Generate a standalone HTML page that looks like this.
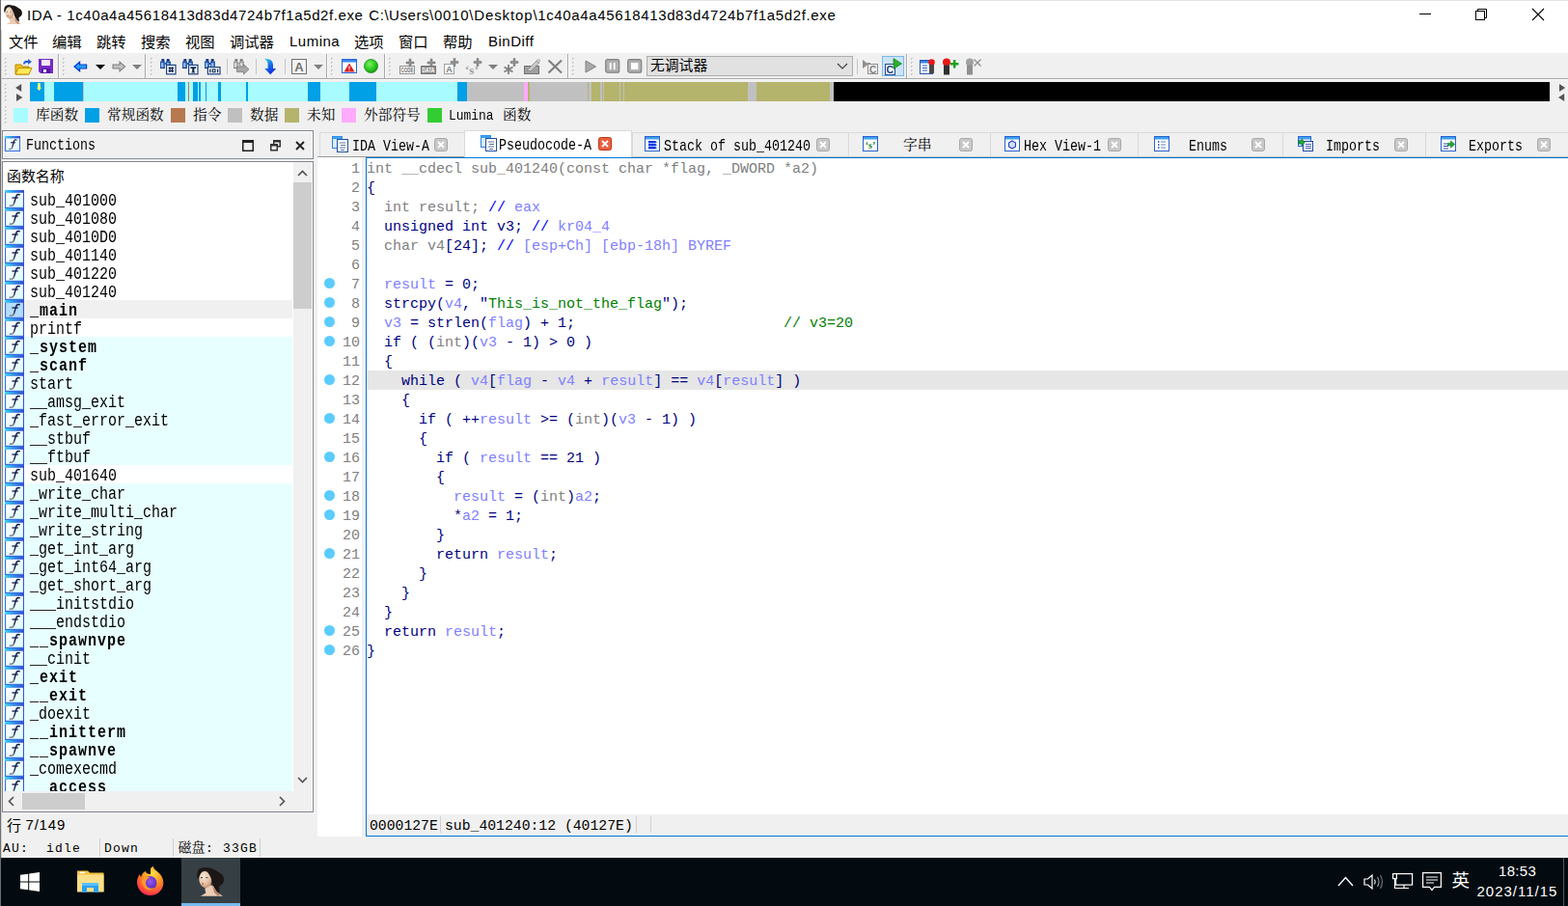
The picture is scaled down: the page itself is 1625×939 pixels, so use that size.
<!DOCTYPE html>
<html><head><meta charset="utf-8"><title>IDA</title>
<style>
html,body{margin:0;padding:0;}
body{width:1625px;height:939px;overflow:hidden;background:#f0f0f0;font-family:"Liberation Sans",sans-serif;}
#root{position:relative;width:1625px;height:939px;overflow:hidden;background:#f0f0f0;}
#root div,#root span.t,#root svg{position:absolute;}
#root div{box-sizing:border-box;}
span.t{white-space:pre;color:#000;}
.mono{font-family:"Liberation Mono",monospace;}
.sans{font-family:"Liberation Sans",sans-serif;}
.serif{font-family:"Liberation Serif",serif;}
.code{font-family:"Liberation Mono",monospace;font-size:15px;}
.fn{font-family:"Liberation Mono",monospace;font-size:15px;}
.b{font-weight:bold;letter-spacing:1px;}
.g{color:#808080}.n{color:#000080}.l{color:#8080ff}.c{color:#0000ff}.s{color:#008000}
.sim{display:inline-block;transform:scaleY(1.2);transform-origin:0 55%;}
.cjs{font-family:"Liberation Sans","Noto Sans CJK SC",sans-serif;}
.cjf{font-family:"Liberation Serif","Noto Serif CJK SC",serif;}

</style></head>
<body>
<div id="root">
<div style="left:0px;top:0px;width:1625px;height:31px;background:#fff;"></div>
<svg style="left:3.7px;top:5px" width="19.2" height="20.2" viewBox="0 0 28.5 30"><defs><filter id="pb0" x="-10%" y="-10%" width="120%" height="120%"><feGaussianBlur stdDeviation="0.5"/></filter>
<radialGradient id="pf0" cx="0.4" cy="0.3" r="0.8"><stop offset="0" stop-color="#f6e8d8"/><stop offset="0.6" stop-color="#e4c0a4"/><stop offset="1" stop-color="#b8805c"/></radialGradient></defs>
<g filter="url(#pb0)">
<path d="M8.3 21.8L13.6 18L17.2 19.5L20.5 25.5L27 29.8H3.8L9.3 26.6Z" fill="#ecccb4"/>
<path d="M16 19L20.5 25.5L24 28.5L22 29.8L18 26Z" fill="#b88060"/>
<ellipse cx="8.8" cy="12.6" rx="6.5" ry="8.6" transform="rotate(-8 8.8 12.6)" fill="url(#pf0)"/>
<path d="M0.6 11.5Q-0.5 5 2.4 1.8Q6 -0.6 10 0.3Q15 0.4 18.5 2.4L22.8 5.2Q27.6 7 28.2 12.6Q28 17 23 19.8L23.6 26.4L20.4 24Q17.4 20 16 16.5Q15.5 12 14 9.5Q11.5 4 8.8 3.4Q5 3.5 3.6 6.4Q2.4 9 1.6 11.8Z" fill="#1e1412"/>
<ellipse cx="6.2" cy="17" rx="1.1" ry="0.8" fill="#c04838"/>
<ellipse cx="5" cy="10.6" rx="1.2" ry="0.6" fill="#4a342c"/><ellipse cx="10.2" cy="10.6" rx="1.2" ry="0.6" fill="#5a4a50"/>
</g></svg>
<span class="t sans" style="left:28px;top:4.5px;height:22px;line-height:22px;font-size:15px;letter-spacing:0.63px;">IDA - </span>
<span class="t sans" style="left:69.3px;top:4.5px;height:22px;line-height:22px;font-size:15px;letter-spacing:0.583px;">1c40a4a45618413d</span>
<span class="t sans" style="left:211.3px;top:4.5px;height:22px;line-height:22px;font-size:15px;letter-spacing:0.583px;">83d4724b7f1a5d2f.exe</span>
<span class="t sans" style="left:382.3px;top:4.5px;height:22px;line-height:22px;font-size:15px;letter-spacing:0.55px;">C:\Users</span>
<span class="t sans" style="left:445px;top:4.5px;height:22px;line-height:22px;font-size:15px;letter-spacing:0.75px;">\0010</span>
<span class="t sans" style="left:486.3px;top:4.5px;height:22px;line-height:22px;font-size:15px;letter-spacing:0.86px;">\Desktop</span>
<span class="t sans" style="left:552.4px;top:4.5px;height:22px;line-height:22px;font-size:15px;letter-spacing:0.643px;">\1c40a4a45618413d</span>
<span class="t sans" style="left:700.1px;top:4.5px;height:22px;line-height:22px;font-size:15px;letter-spacing:0.643px;">83d4724b7f1a5d2f.exe</span>
<div style="left:1471px;top:14px;width:12px;height:1px;background:#000;"></div>
<div style="left:1px;top:0px;width:1624px;height:1px;background:#e2e2e8;"></div>
<svg style="left:1528px;top:8px" width="14" height="14" viewBox="0 0 14 14" fill="none" stroke="#000" stroke-width="1"><rect x="1.5" y="3.5" width="9" height="9"/><path d="M3.5 3.5V1.5H12.5V10.5H10.5"/></svg>
<svg style="left:1587px;top:8px" width="14" height="14" viewBox="0 0 14 14" fill="none" stroke="#000" stroke-width="1.1"><path d="M1 1L13 13M13 1L1 13"/></svg>
<div style="left:0px;top:31px;width:1625px;height:24px;background:#fff;"></div>
<span class="t cjs" style="left:9px;top:35.5px;height:15.3px;line-height:15.3px;font-size:15.3px;">文件</span>
<span class="t cjs" style="left:54px;top:35.5px;height:15.3px;line-height:15.3px;font-size:15.3px;">编辑</span>
<span class="t cjs" style="left:100px;top:35.5px;height:15.3px;line-height:15.3px;font-size:15.3px;">跳转</span>
<span class="t cjs" style="left:146px;top:35.5px;height:15.3px;line-height:15.3px;font-size:15.3px;">搜索</span>
<span class="t cjs" style="left:192px;top:35.5px;height:15.3px;line-height:15.3px;font-size:15.3px;">视图</span>
<span class="t cjs" style="left:238px;top:35.5px;height:15.3px;line-height:15.3px;font-size:15.3px;">调试器</span>
<span class="t sans" style="left:300px;top:33px;height:20px;line-height:20px;font-size:15px;letter-spacing:0.5px;">Lumina</span>
<span class="t cjs" style="left:367px;top:35.5px;height:15.3px;line-height:15.3px;font-size:15.3px;">选项</span>
<span class="t cjs" style="left:413px;top:35.5px;height:15.3px;line-height:15.3px;font-size:15.3px;">窗口</span>
<span class="t cjs" style="left:459px;top:35.5px;height:15.3px;line-height:15.3px;font-size:15.3px;">帮助</span>
<span class="t sans" style="left:506px;top:33px;height:20px;line-height:20px;font-size:15px;letter-spacing:0.5px;">BinDiff</span>
<div style="left:0px;top:55px;width:1625px;height:28px;background:#f0f0f0;"></div>
<div style="left:0px;top:81px;width:1625px;height:1px;background:#a8a8a8;"></div>
<div style="left:0px;top:82px;width:1625px;height:1px;background:#fafafa;"></div>
<div style="left:5px;top:60px;width:2px;height:2px;background:#c6c6c6;"></div>
<div style="left:6px;top:61px;width:1px;height:1px;background:#fff;"></div>
<div style="left:5px;top:64px;width:2px;height:2px;background:#c6c6c6;"></div>
<div style="left:6px;top:65px;width:1px;height:1px;background:#fff;"></div>
<div style="left:5px;top:68px;width:2px;height:2px;background:#c6c6c6;"></div>
<div style="left:6px;top:69px;width:1px;height:1px;background:#fff;"></div>
<div style="left:5px;top:72px;width:2px;height:2px;background:#c6c6c6;"></div>
<div style="left:6px;top:73px;width:1px;height:1px;background:#fff;"></div>
<div style="left:5px;top:76px;width:2px;height:2px;background:#c6c6c6;"></div>
<div style="left:6px;top:77px;width:1px;height:1px;background:#fff;"></div>
<svg style="left:15px;top:60px" width="19" height="18" viewBox="0 0 19 18"><path d="M1 7H7L8 9H15V17H1Z" fill="#f0c020" stroke="#b88800" stroke-width="1"/>
<path d="M1 17L4 10.5H18L15 17Z" fill="#ffe858" stroke="#c09000" stroke-width="1"/>
<path d="M9 6Q10 2 14 3V1L18 4L14 7V5Q11 4.5 10 7Z" fill="#2860d8"/></svg>
<svg style="left:39px;top:61px" width="17" height="15" viewBox="0 0 17 15"><path d="M1 0H16V15H3L1 13Z" fill="#7828c8"/><rect x="4" y="1" width="9" height="6" fill="#f4e8f4"/>
<rect x="4" y="10" width="9" height="5" fill="#5818a0"/><rect x="6" y="11" width="3" height="3" fill="#fff"/></svg>
<div style="left:60px;top:56px;width:1px;height:25px;background:#a8a8a8;"></div>
<div style="left:61px;top:56px;width:1px;height:25px;background:#fff;"></div>
<div style="left:65px;top:60px;width:2px;height:2px;background:#c6c6c6;"></div>
<div style="left:66px;top:61px;width:1px;height:1px;background:#fff;"></div>
<div style="left:65px;top:64px;width:2px;height:2px;background:#c6c6c6;"></div>
<div style="left:66px;top:65px;width:1px;height:1px;background:#fff;"></div>
<div style="left:65px;top:68px;width:2px;height:2px;background:#c6c6c6;"></div>
<div style="left:66px;top:69px;width:1px;height:1px;background:#fff;"></div>
<div style="left:65px;top:72px;width:2px;height:2px;background:#c6c6c6;"></div>
<div style="left:66px;top:73px;width:1px;height:1px;background:#fff;"></div>
<div style="left:65px;top:76px;width:2px;height:2px;background:#c6c6c6;"></div>
<div style="left:66px;top:77px;width:1px;height:1px;background:#fff;"></div>
<svg style="left:76px;top:63px" width="15" height="12" viewBox="0 0 15 12"><path d="M1 6L6.6 1.2V4H13.6V8H6.6V10.8Z" fill="#28a0f8" stroke="#0838d0" stroke-width="1.2"/></svg>
<svg style="left:99px;top:67px" width="10" height="5" viewBox="0 0 10 5"><path d="M0 0H10L5 5Z" fill="#000"/></svg>
<svg style="left:116px;top:63px" width="15" height="12" viewBox="0 0 15 12"><path d="M13.6 6L8 1.2V4H1V8H8V10.8Z" fill="#c0c0c0" stroke="#808080" stroke-width="1.1"/></svg>
<svg style="left:137px;top:67px" width="10" height="5" viewBox="0 0 10 5"><path d="M0 0H10L5 5Z" fill="#808080"/></svg>
<div style="left:150px;top:56px;width:1px;height:25px;background:#a8a8a8;"></div>
<div style="left:151px;top:56px;width:1px;height:25px;background:#fff;"></div>
<div style="left:156px;top:60px;width:2px;height:2px;background:#c6c6c6;"></div>
<div style="left:157px;top:61px;width:1px;height:1px;background:#fff;"></div>
<div style="left:156px;top:64px;width:2px;height:2px;background:#c6c6c6;"></div>
<div style="left:157px;top:65px;width:1px;height:1px;background:#fff;"></div>
<div style="left:156px;top:68px;width:2px;height:2px;background:#c6c6c6;"></div>
<div style="left:157px;top:69px;width:1px;height:1px;background:#fff;"></div>
<div style="left:156px;top:72px;width:2px;height:2px;background:#c6c6c6;"></div>
<div style="left:157px;top:73px;width:1px;height:1px;background:#fff;"></div>
<div style="left:156px;top:76px;width:2px;height:2px;background:#c6c6c6;"></div>
<div style="left:157px;top:77px;width:1px;height:1px;background:#fff;"></div>
<svg style="left:166px;top:61px" width="17" height="17" viewBox="0 0 17 17"><path d="M1.5 0.3H4.2V2.6H5V4H6V2.6H6.8V0.3H9.5V2.6H11V9.8H6V6H5V9.8H0V2.6H1.5Z" fill="#2c58a8"/>
<path d="M1.5 0.3H4.2V2.2H1.5ZM6.8 0.3H9.5V2.2H6.8Z" fill="#16306c"/>
<rect x="1" y="4.2" width="2.2" height="4.6" fill="#8cbcf4"/><rect x="7" y="4.2" width="2.2" height="4.6" fill="#8cbcf4"/>
<rect x="3.2" y="4.2" width="1" height="4.6" fill="#5088d8"/><rect x="9.2" y="4.2" width="1" height="4.6" fill="#5088d8"/>
<rect x="0" y="9" width="5" height="0.9" fill="#16306c"/><rect x="6" y="9" width="5" height="0.9" fill="#16306c"/><rect x="6.6" y="6.4" width="9.4" height="9.4" fill="#fff" stroke="#1c4080" stroke-width="1.2"/><path d="M8.6 9.7H14M8.6 12.5H14M10 8.2V14M12.6 8.2V14" stroke="#102850" stroke-width="1.3" fill="none"/></svg>
<svg style="left:189px;top:61px" width="17" height="17" viewBox="0 0 17 17"><path d="M1.5 0.3H4.2V2.6H5V4H6V2.6H6.8V0.3H9.5V2.6H11V9.8H6V6H5V9.8H0V2.6H1.5Z" fill="#2c58a8"/>
<path d="M1.5 0.3H4.2V2.2H1.5ZM6.8 0.3H9.5V2.2H6.8Z" fill="#16306c"/>
<rect x="1" y="4.2" width="2.2" height="4.6" fill="#8cbcf4"/><rect x="7" y="4.2" width="2.2" height="4.6" fill="#8cbcf4"/>
<rect x="3.2" y="4.2" width="1" height="4.6" fill="#5088d8"/><rect x="9.2" y="4.2" width="1" height="4.6" fill="#5088d8"/>
<rect x="0" y="9" width="5" height="0.9" fill="#16306c"/><rect x="6" y="9" width="5" height="0.9" fill="#16306c"/><rect x="6.6" y="6.4" width="9.4" height="9.4" fill="#fff" stroke="#1c4080" stroke-width="1.2"/><path d="M8.4 8.2H14.2V10H12.4V13.4H13.2V14.4H9.4V13.4H10.2V10H8.4Z" fill="#102850"/></svg>
<svg style="left:212px;top:61px" width="17" height="17" viewBox="0 0 17 17"><path d="M1.5 0.3H4.2V2.6H5V4H6V2.6H6.8V0.3H9.5V2.6H11V9.8H6V6H5V9.8H0V2.6H1.5Z" fill="#2c58a8"/>
<path d="M1.5 0.3H4.2V2.2H1.5ZM6.8 0.3H9.5V2.2H6.8Z" fill="#16306c"/>
<rect x="1" y="4.2" width="2.2" height="4.6" fill="#8cbcf4"/><rect x="7" y="4.2" width="2.2" height="4.6" fill="#8cbcf4"/>
<rect x="3.2" y="4.2" width="1" height="4.6" fill="#5088d8"/><rect x="9.2" y="4.2" width="1" height="4.6" fill="#5088d8"/>
<rect x="0" y="9" width="5" height="0.9" fill="#16306c"/><rect x="6" y="9" width="5" height="0.9" fill="#16306c"/><rect x="3.4" y="8.6" width="12.6" height="7.2" fill="#fff" stroke="#1c4080" stroke-width="1.2"/><path d="M5.8 10.4V14.2M13.6 10.4V14.2" stroke="#102850" stroke-width="1.3"/><rect x="8.2" y="10.9" width="2.8" height="2.8" fill="none" stroke="#102850" stroke-width="1.1"/></svg>
<div style="left:235px;top:61px;width:1px;height:16px;background:#c4c4c4;"></div>
<svg style="left:242px;top:61px" width="17" height="17" viewBox="0 0 17 17"><path d="M1.5 0.3H4.2V2.6H5V4H6V2.6H6.8V0.3H9.5V2.6H11V9.8H6V6H5V9.8H0V2.6H1.5Z" fill="#a0a0a0"/>
<path d="M1.5 0.3H4.2V2.2H1.5ZM6.8 0.3H9.5V2.2H6.8Z" fill="#787878"/>
<rect x="1" y="4.2" width="2.2" height="4.6" fill="#d8d8d8"/><rect x="7" y="4.2" width="2.2" height="4.6" fill="#d8d8d8"/>
<rect x="3.2" y="4.2" width="1" height="4.6" fill="#b8b8b8"/><rect x="9.2" y="4.2" width="1" height="4.6" fill="#b8b8b8"/>
<rect x="0" y="9" width="5" height="0.9" fill="#787878"/><rect x="6" y="9" width="5" height="0.9" fill="#787878"/><path d="M3.5 8H10.5V5.6L16 10.8L10.5 16V13.6H3.5Z" fill="#a8a8a8" stroke="#787878" stroke-width="0.8"/></svg>
<div style="left:265px;top:61px;width:1px;height:16px;background:#c4c4c4;"></div>
<svg style="left:273px;top:60px" width="14" height="18" viewBox="0 0 14 18"><defs><linearGradient id="da" x1="0" x2="0.6" y1="0" y2="1"><stop offset="0" stop-color="#30d8f0"/><stop offset="0.45" stop-color="#1878e8"/><stop offset="1" stop-color="#1028e0"/></linearGradient></defs><path d="M1 0.8Q9.5 0.5 10 7V11H13.2L7.2 17.2L1.2 11H4.6V7.5Q4.8 3 1 0.8Z" fill="url(#da)"/></svg>
<div style="left:295px;top:61px;width:1px;height:16px;background:#c4c4c4;"></div>
<svg style="left:302px;top:61px" width="16" height="16" viewBox="0 0 16 16"><rect x="0.5" y="0.5" width="15" height="15" fill="#f4f4f4" stroke="#707070"/><text x="8" y="13" font-family="Liberation Sans" font-weight="bold" font-size="13" text-anchor="middle" fill="#707070">A</text></svg>
<svg style="left:325px;top:67px" width="10" height="5" viewBox="0 0 10 5"><path d="M0 0H10L5 5Z" fill="#808080"/></svg>
<div style="left:338px;top:56px;width:1px;height:25px;background:#a8a8a8;"></div>
<div style="left:339px;top:56px;width:1px;height:25px;background:#fff;"></div>
<div style="left:343px;top:60px;width:2px;height:2px;background:#c6c6c6;"></div>
<div style="left:344px;top:61px;width:1px;height:1px;background:#fff;"></div>
<div style="left:343px;top:64px;width:2px;height:2px;background:#c6c6c6;"></div>
<div style="left:344px;top:65px;width:1px;height:1px;background:#fff;"></div>
<div style="left:343px;top:68px;width:2px;height:2px;background:#c6c6c6;"></div>
<div style="left:344px;top:69px;width:1px;height:1px;background:#fff;"></div>
<div style="left:343px;top:72px;width:2px;height:2px;background:#c6c6c6;"></div>
<div style="left:344px;top:73px;width:1px;height:1px;background:#fff;"></div>
<div style="left:343px;top:76px;width:2px;height:2px;background:#c6c6c6;"></div>
<div style="left:344px;top:77px;width:1px;height:1px;background:#fff;"></div>
<svg style="left:354px;top:61px" width="16" height="15" viewBox="0 0 16 15"><rect x="0.5" y="0.5" width="15" height="14" fill="#fff" stroke="#2868e0"/><rect x="1" y="1" width="14" height="2.5" fill="#3888f0"/><path d="M8 4.5L13.5 13.5H2.5Z" fill="#e01818"/><path d="M8 7.5V10.5M8 11.5V12.5" stroke="#fff" stroke-width="1.2"/></svg>
<svg style="left:377px;top:61px" width="15" height="15" viewBox="0 0 15 15"><defs><radialGradient id="gg" cx="0.4" cy="0.35" r="0.7"><stop offset="0" stop-color="#80f060"/><stop offset="0.6" stop-color="#28c820"/><stop offset="1" stop-color="#189010"/></radialGradient></defs><circle cx="7.5" cy="7.5" r="7" fill="url(#gg)" stroke="#188818" stroke-width="0.8"/></svg>
<div style="left:398px;top:56px;width:1px;height:25px;background:#a8a8a8;"></div>
<div style="left:399px;top:56px;width:1px;height:25px;background:#fff;"></div>
<div style="left:403px;top:60px;width:2px;height:2px;background:#c6c6c6;"></div>
<div style="left:404px;top:61px;width:1px;height:1px;background:#fff;"></div>
<div style="left:403px;top:64px;width:2px;height:2px;background:#c6c6c6;"></div>
<div style="left:404px;top:65px;width:1px;height:1px;background:#fff;"></div>
<div style="left:403px;top:68px;width:2px;height:2px;background:#c6c6c6;"></div>
<div style="left:404px;top:69px;width:1px;height:1px;background:#fff;"></div>
<div style="left:403px;top:72px;width:2px;height:2px;background:#c6c6c6;"></div>
<div style="left:404px;top:73px;width:1px;height:1px;background:#fff;"></div>
<div style="left:403px;top:76px;width:2px;height:2px;background:#c6c6c6;"></div>
<div style="left:404px;top:77px;width:1px;height:1px;background:#fff;"></div>
<svg style="left:414px;top:60px" width="17" height="18" viewBox="0 0 17 18"><rect x="0.5" y="8.5" width="15" height="8" fill="#fafafa" stroke="#909090"/><text x="1.6" y="15.3" font-family="Liberation Sans" font-weight="bold" font-size="6.4" textLength="12.8" lengthAdjust="spacingAndGlyphs" fill="#707070">CODE</text><path d="M7 4h3v-3h2v3h3v2h-3v3h-2v-3h-3z" fill="#909090" stroke="#707070" stroke-width="0.5"/></svg>
<svg style="left:436px;top:60px" width="17" height="18" viewBox="0 0 17 18"><rect x="0.5" y="8.5" width="15" height="8" fill="#8c8c8c" stroke="#787878"/><text x="1.6" y="15.3" font-family="Liberation Sans" font-weight="bold" font-size="6.4" textLength="12.8" lengthAdjust="spacingAndGlyphs" fill="#fff">DATA</text><path d="M7 4h3v-3h2v3h3v2h-3v3h-2v-3h-3z" fill="#909090" stroke="#707070" stroke-width="0.5"/></svg>
<svg style="left:459px;top:60px" width="17" height="18" viewBox="0 0 17 18"><rect x="1.5" y="6.5" width="10" height="10" fill="#f8f8f8" stroke="#a0a0a0"/><text x="3.2" y="15.2" font-family="Liberation Sans" font-weight="bold" font-size="9" fill="#808080">A</text><path d="M8 3.5h3v-3h2v3h3v2h-3v3h-2v-3h-3z" fill="#909090" stroke="#707070" stroke-width="0.5"/></svg>
<svg style="left:482px;top:60px" width="18" height="18" viewBox="0 0 18 18"><text x="0" y="17" font-family="Liberation Serif" font-weight="bold" font-size="13" fill="#a0a0a0">‘s’</text><path d="M9 3.5h3v-3h2v3h3v2h-3v3h-2v-3h-3z" fill="#909090" stroke="#707070" stroke-width="0.5"/></svg>
<svg style="left:506px;top:67px" width="10" height="5" viewBox="0 0 10 5"><path d="M0 0H10L5 5Z" fill="#808080"/></svg>
<svg style="left:521px;top:60px" width="17" height="18" viewBox="0 0 17 18"><path d="M6 7V17M1.5 9.5L10.5 14.5M1.5 14.5L10.5 9.5" stroke="#808080" stroke-width="1.8"/><path d="M8 3.5h3v-3h2v3h3v2h-3v3h-2v-3h-3z" fill="#909090" stroke="#707070" stroke-width="0.5"/></svg>
<svg style="left:543px;top:60px" width="18" height="18" viewBox="0 0 18 18"><rect x="0.5" y="8.5" width="15" height="8" fill="#a0a0a0" stroke="#707070"/><path d="M3 13L13 3L16 5L7 14Z" fill="#c8c8c8" stroke="#808080" stroke-width="0.7"/><circle cx="15" cy="3" r="1.5" fill="#d0d0d0" stroke="#909090" stroke-width="0.5"/></svg>
<svg style="left:567px;top:61px" width="17" height="16" viewBox="0 0 17 16"><path d="M1.5 1.5L15 14.5M15 1.5L1.5 14.5" stroke="#808080" stroke-width="2.2"/></svg>
<div style="left:588px;top:56px;width:1px;height:25px;background:#a8a8a8;"></div>
<div style="left:589px;top:56px;width:1px;height:25px;background:#fff;"></div>
<div style="left:593px;top:60px;width:2px;height:2px;background:#c6c6c6;"></div>
<div style="left:594px;top:61px;width:1px;height:1px;background:#fff;"></div>
<div style="left:593px;top:64px;width:2px;height:2px;background:#c6c6c6;"></div>
<div style="left:594px;top:65px;width:1px;height:1px;background:#fff;"></div>
<div style="left:593px;top:68px;width:2px;height:2px;background:#c6c6c6;"></div>
<div style="left:594px;top:69px;width:1px;height:1px;background:#fff;"></div>
<div style="left:593px;top:72px;width:2px;height:2px;background:#c6c6c6;"></div>
<div style="left:594px;top:73px;width:1px;height:1px;background:#fff;"></div>
<div style="left:593px;top:76px;width:2px;height:2px;background:#c6c6c6;"></div>
<div style="left:594px;top:77px;width:1px;height:1px;background:#fff;"></div>
<svg style="left:606px;top:62px" width="13" height="14" viewBox="0 0 13 14"><path d="M1 1L11.5 7L1 13Z" fill="#a8a8a8" stroke="#808080" stroke-width="1"/></svg>
<svg style="left:627px;top:61px" width="16" height="15" viewBox="0 0 16 15"><rect x="0.7" y="0.7" width="14" height="13.5" rx="2" fill="#b0b0b0" stroke="#808080" stroke-width="1.2"/><path d="M5.7 4V11M9.7 4V11" stroke="#fff" stroke-width="1.8"/></svg>
<svg style="left:650px;top:61px" width="16" height="15" viewBox="0 0 16 15"><rect x="0.7" y="0.7" width="14" height="13.5" rx="2" fill="#b0b0b0" stroke="#808080" stroke-width="1.2"/><rect x="4" y="4" width="7.4" height="7" fill="#fff"/></svg>
<div style="left:670px;top:58px;width:214px;height:21px;background:#e1e1e1;border:1px solid #adadad;"></div>
<span class="t cjs" style="left:674px;top:61px;height:14.8px;line-height:14.8px;font-size:14.8px;">无调试器</span>
<svg style="left:867px;top:65px" width="12" height="7" viewBox="0 0 12 7"><path d="M1 1L6 6L11 1" fill="none" stroke="#404040" stroke-width="1.2"/></svg>
<div style="left:888px;top:61px;width:1px;height:16px;background:#c4c4c4;"></div>
<svg style="left:893px;top:60px" width="18" height="18" viewBox="0 0 18 18"><path d="M1 3L6 6V4H9V8H6V6Z" fill="#909090" transform="translate(0,1) scale(1,1)"/><path d="M1 2L7 6.5L1 11Z" fill="#909090"/><rect x="6.5" y="6.5" width="10" height="10" fill="#f0f0f0" stroke="#909090"/><text x="8" y="15.5" font-family="Liberation Sans" font-weight="bold" font-size="10" fill="#808080">C</text></svg>
<div style="left:914px;top:58px;width:23px;height:21px;background:#cce4f7;border:1px solid #7ab8ee;"></div>
<svg style="left:917px;top:60px" width="18" height="18" viewBox="0 0 18 18"><rect x="0.5" y="6.5" width="10" height="11" fill="#fff" stroke="#204890"/><text x="1.5" y="16" font-family="Liberation Sans" font-weight="bold" font-size="10.5" fill="#183880">C</text><path d="M9 0.5L17.5 6L9 11.5Z" fill="#28b028" stroke="#107010" stroke-width="0.6"/></svg>
<div style="left:939px;top:56px;width:1px;height:25px;background:#a8a8a8;"></div>
<div style="left:940px;top:56px;width:1px;height:25px;background:#fff;"></div>
<div style="left:944px;top:60px;width:2px;height:2px;background:#c6c6c6;"></div>
<div style="left:945px;top:61px;width:1px;height:1px;background:#fff;"></div>
<div style="left:944px;top:64px;width:2px;height:2px;background:#c6c6c6;"></div>
<div style="left:945px;top:65px;width:1px;height:1px;background:#fff;"></div>
<div style="left:944px;top:68px;width:2px;height:2px;background:#c6c6c6;"></div>
<div style="left:945px;top:69px;width:1px;height:1px;background:#fff;"></div>
<div style="left:944px;top:72px;width:2px;height:2px;background:#c6c6c6;"></div>
<div style="left:945px;top:73px;width:1px;height:1px;background:#fff;"></div>
<div style="left:944px;top:76px;width:2px;height:2px;background:#c6c6c6;"></div>
<div style="left:945px;top:77px;width:1px;height:1px;background:#fff;"></div>
<svg style="left:953px;top:60px" width="18" height="18" viewBox="0 0 18 18"><rect x="0.5" y="2.5" width="13" height="14" fill="#fff" stroke="#2858b0"/><rect x="1" y="3" width="12" height="2.5" fill="#3880e8"/><path d="M3 8H8M3 10.5H8M3 13H8" stroke="#2858b0"/><circle cx="12.5" cy="4.5" r="3.3" fill="#e81818"/><rect x="10" y="7" width="5" height="9" fill="#484848"/></svg>
<svg style="left:976px;top:60px" width="18" height="18" viewBox="0 0 18 18"><circle cx="5" cy="4.5" r="4" fill="#e81818"/><rect x="2" y="7.5" width="6" height="10" fill="#303030"/><path d="M9 5h3v-3h2.4v3h3v2.4h-3v3h-2.4v-3h-3z" fill="#18a018"/></svg>
<svg style="left:1000px;top:60px" width="18" height="18" viewBox="0 0 18 18"><circle cx="5" cy="4.5" r="4" fill="#a0a0a0"/><rect x="2" y="7.5" width="6" height="10" fill="#909090"/><path d="M9.5 1.5L16.5 8.5M16.5 1.5L9.5 8.5" stroke="#909090" stroke-width="1.4"/></svg>
<div style="left:5px;top:87px;width:2px;height:2px;background:#c6c6c6;"></div>
<div style="left:6px;top:88px;width:1px;height:1px;background:#fff;"></div>
<div style="left:5px;top:91px;width:2px;height:2px;background:#c6c6c6;"></div>
<div style="left:6px;top:92px;width:1px;height:1px;background:#fff;"></div>
<div style="left:5px;top:95px;width:2px;height:2px;background:#c6c6c6;"></div>
<div style="left:6px;top:96px;width:1px;height:1px;background:#fff;"></div>
<div style="left:5px;top:99px;width:2px;height:2px;background:#c6c6c6;"></div>
<div style="left:6px;top:100px;width:1px;height:1px;background:#fff;"></div>
<div style="left:5px;top:103px;width:2px;height:2px;background:#c6c6c6;"></div>
<div style="left:6px;top:104px;width:1px;height:1px;background:#fff;"></div>
<svg style="left:16px;top:86.5px" width="7" height="8" viewBox="0 0 7 8"><path d="M6.2 0V8L0 4Z" fill="#555"/></svg>
<svg style="left:16.6px;top:96.5px" width="7" height="8" viewBox="0 0 7 8"><path d="M0 0V8L6.4 4Z" fill="#555"/></svg>
<div style="left:31px;top:85px;width:15px;height:20px;background:#00a0e6;"></div>
<div style="left:46px;top:85px;width:10px;height:20px;background:#a8fcff;"></div>
<div style="left:56px;top:85px;width:30px;height:20px;background:#00a0e6;"></div>
<div style="left:86px;top:85px;width:1px;height:20px;background:#c0c0c0;"></div>
<div style="left:87px;top:85px;width:97px;height:20px;background:#a8fcff;"></div>
<div style="left:184px;top:85px;width:8px;height:20px;background:#00a0e6;"></div>
<div style="left:192px;top:85px;width:3px;height:20px;background:#a8fcff;"></div>
<div style="left:195px;top:85px;width:1px;height:20px;background:#b87850;"></div>
<div style="left:196px;top:85px;width:4px;height:20px;background:#a8fcff;"></div>
<div style="left:200px;top:85px;width:5px;height:20px;background:#00a0e6;"></div>
<div style="left:205px;top:85px;width:1px;height:20px;background:#a8fcff;"></div>
<div style="left:206px;top:85px;width:2px;height:20px;background:#00a0e6;"></div>
<div style="left:208px;top:85px;width:5px;height:20px;background:#a8fcff;"></div>
<div style="left:213px;top:85px;width:1px;height:20px;background:#00a0e6;"></div>
<div style="left:214px;top:85px;width:12px;height:20px;background:#a8fcff;"></div>
<div style="left:226px;top:85px;width:3px;height:20px;background:#00a0e6;"></div>
<div style="left:229px;top:85px;width:26px;height:20px;background:#a8fcff;"></div>
<div style="left:255px;top:85px;width:2px;height:20px;background:#00a0e6;"></div>
<div style="left:257px;top:85px;width:62px;height:20px;background:#a8fcff;"></div>
<div style="left:319px;top:85px;width:13px;height:20px;background:#00a0e6;"></div>
<div style="left:332px;top:85px;width:30px;height:20px;background:#a8fcff;"></div>
<div style="left:362px;top:85px;width:28px;height:20px;background:#00a0e6;"></div>
<div style="left:390px;top:85px;width:84px;height:20px;background:#a8fcff;"></div>
<div style="left:474px;top:85px;width:10px;height:20px;background:#00a0e6;"></div>
<div style="left:484px;top:85px;width:59px;height:20px;background:#c0c0c0;"></div>
<div style="left:543px;top:85px;width:4px;height:20px;background:#ffaaff;"></div>
<div style="left:547px;top:85px;width:2px;height:20px;background:#b4b46c;"></div>
<div style="left:549px;top:85px;width:60px;height:20px;background:#c0c0c0;"></div>
<div style="left:609px;top:85px;width:1px;height:20px;background:#b4b46c;"></div>
<div style="left:610px;top:85px;width:3px;height:20px;background:#c0c0c0;"></div>
<div style="left:613px;top:85px;width:9px;height:20px;background:#b4b46c;"></div>
<div style="left:622px;top:85px;width:2px;height:20px;background:#c0c0c0;"></div>
<div style="left:624px;top:85px;width:1px;height:20px;background:#b4b46c;"></div>
<div style="left:625px;top:85px;width:1px;height:20px;background:#c0c0c0;"></div>
<div style="left:626px;top:85px;width:16px;height:20px;background:#b4b46c;"></div>
<div style="left:642px;top:85px;width:1px;height:20px;background:#c0c0c0;"></div>
<div style="left:643px;top:85px;width:3px;height:20px;background:#b4b46c;"></div>
<div style="left:646px;top:85px;width:1px;height:20px;background:#c0c0c0;"></div>
<div style="left:647px;top:85px;width:128px;height:20px;background:#b4b46c;"></div>
<div style="left:775px;top:85px;width:9px;height:20px;background:#c0c0c0;"></div>
<div style="left:784px;top:85px;width:76px;height:20px;background:#b4b46c;"></div>
<div style="left:860px;top:85px;width:4px;height:20px;background:#c0c0c0;"></div>
<div style="left:864px;top:85px;width:742px;height:20px;background:#000;"></div>
<svg style="left:38px;top:86px" width="5" height="8" viewBox="0 0 5 8"><path d="M1.2 0H3.8V4.8H5L2.5 8L0 4.8H1.2Z" fill="#ffff66"/></svg>
<svg style="left:1616px;top:86.5px" width="7" height="8" viewBox="0 0 7 8"><path d="M0 0V8L6.2 4Z" fill="#555"/></svg>
<svg style="left:1615px;top:96.5px" width="7" height="8" viewBox="0 0 7 8"><path d="M6.2 0V8L0 4Z" fill="#555"/></svg>
<div style="left:5px;top:110px;width:2px;height:2px;background:#c6c6c6;"></div>
<div style="left:6px;top:111px;width:1px;height:1px;background:#fff;"></div>
<div style="left:5px;top:114px;width:2px;height:2px;background:#c6c6c6;"></div>
<div style="left:6px;top:115px;width:1px;height:1px;background:#fff;"></div>
<div style="left:5px;top:118px;width:2px;height:2px;background:#c6c6c6;"></div>
<div style="left:6px;top:119px;width:1px;height:1px;background:#fff;"></div>
<div style="left:5px;top:122px;width:2px;height:2px;background:#c6c6c6;"></div>
<div style="left:6px;top:123px;width:1px;height:1px;background:#fff;"></div>
<div style="left:5px;top:126px;width:2px;height:2px;background:#c6c6c6;"></div>
<div style="left:6px;top:127px;width:1px;height:1px;background:#fff;"></div>
<div style="left:14px;top:112px;width:15px;height:15px;background:#a8fcff;"></div>
<span class="t cjf" style="left:37px;top:112px;height:14.7px;line-height:14.7px;font-size:14.7px;">库函数</span>
<div style="left:88px;top:112px;width:15px;height:15px;background:#00a0e6;"></div>
<span class="t cjf" style="left:111px;top:112px;height:14.7px;line-height:14.7px;font-size:14.7px;">常规函数</span>
<div style="left:177px;top:112px;width:15px;height:15px;background:#b87850;"></div>
<span class="t cjf" style="left:200px;top:112px;height:14.7px;line-height:14.7px;font-size:14.7px;">指令</span>
<div style="left:236px;top:112px;width:15px;height:15px;background:#c0c0c0;"></div>
<span class="t cjf" style="left:259px;top:112px;height:14.7px;line-height:14.7px;font-size:14.7px;">数据</span>
<div style="left:295px;top:112px;width:15px;height:15px;background:#b4b46c;"></div>
<span class="t cjf" style="left:318px;top:112px;height:14.7px;line-height:14.7px;font-size:14.7px;">未知</span>
<div style="left:354px;top:112px;width:15px;height:15px;background:#ffaaff;"></div>
<span class="t cjf" style="left:377px;top:112px;height:14.7px;line-height:14.7px;font-size:14.7px;">外部符号</span>
<div style="left:443px;top:112px;width:15px;height:15px;background:#32cd32;"></div>
<span class="t mono" style="left:465px;top:110.5px;height:20px;line-height:20px;font-size:12.9px;"><span class="sim">Lumina</span></span>
<span class="t cjf" style="left:521px;top:112px;height:14.7px;line-height:14.7px;font-size:14.7px;">函数</span>
<div style="left:0px;top:0px;width:1px;height:889px;background:#6e6e6e;"></div>
<div style="left:1px;top:31px;width:1px;height:858px;background:#d4d4d4;"></div>
<div style="left:2px;top:135px;width:323px;height:30px;background:#f0f0f0;border:1px solid #828790;box-shadow:inset 0 0 0 1px #fff;"></div>
<svg width="0" height="0" style="position:absolute"><defs><linearGradient id="fb" x1="0" x2="1" y1="0" y2="0"><stop offset="0" stop-color="#38d8f8"/><stop offset="0.5" stop-color="#3088e8"/><stop offset="1" stop-color="#3848d0"/></linearGradient><linearGradient id="ff" x1="0" x2="1" y1="0" y2="1"><stop offset="0" stop-color="#ffffff"/><stop offset="1" stop-color="#dcfcfc"/></linearGradient><linearGradient id="fs" x1="0" x2="0" y1="0" y2="1"><stop offset="0" stop-color="#101848"/><stop offset="0.6" stop-color="#202850"/><stop offset="1" stop-color="#808890"/></linearGradient></defs></svg>
<svg style="left:5px;top:141px" width="16" height="16" viewBox="0 0 16 16"><rect x="0" y="0" width="16" height="16" fill="#3470e0"/><rect x="0" y="0" width="16" height="2.4" fill="url(#fb)"/>
<rect x="1" y="2.4" width="14" height="12.6" fill="url(#ff)"/>
<path d="M12 4Q10 3.2 9.4 5.4L7.6 12Q6.8 14 4.4 13.6" fill="none" stroke="url(#fs)" stroke-width="1.3" stroke-linecap="round"/>
<path d="M6 6.8H11" stroke="#101848" stroke-width="1.1"/></svg>
<span class="t mono" style="left:27px;top:142px;height:20px;line-height:20px;font-size:13.33px;"><span class="sim">Functions</span></span>
<svg style="left:251px;top:145px" width="12" height="12" viewBox="0 0 12 12"><rect x="0.75" y="0.75" width="10.5" height="10.5" fill="none" stroke="#222" stroke-width="1.5"/><rect x="0" y="0" width="12" height="3" fill="#222"/></svg>
<svg style="left:280px;top:145px" width="11" height="12" viewBox="0 0 11 12"><rect x="3.75" y="0.75" width="6.5" height="6" fill="none" stroke="#333" stroke-width="1.5"/><rect x="3" y="0" width="8" height="2.5" fill="#333"/><rect x="0.75" y="4.75" width="6.5" height="6" fill="#f0f0f0" stroke="#333" stroke-width="1.5"/><rect x="0" y="4" width="8" height="2.5" fill="#333"/></svg>
<svg style="left:306px;top:146px" width="10" height="10" viewBox="0 0 10 10"><path d="M1 1L9 9M9 1L1 9" stroke="#222" stroke-width="1.9"/></svg>
<div style="left:2px;top:167px;width:323px;height:675px;background:#fff;border:1px solid #828790;"></div>
<span class="t cjs" style="left:7px;top:176px;height:14.9px;line-height:14.9px;font-size:14.9px;">函数名称</span>
<div style="left:3px;top:197px;width:300px;height:623px;overflow:hidden;">
<div style="left:0px;top:0px;width:301px;height:19px;background:#fff;"></div>
<div style="left:0px;top:19px;width:301px;height:19px;background:#fff;"></div>
<div style="left:0px;top:38px;width:301px;height:19px;background:#fff;"></div>
<div style="left:0px;top:57px;width:301px;height:19px;background:#fff;"></div>
<div style="left:0px;top:76px;width:301px;height:19px;background:#fff;"></div>
<div style="left:0px;top:95px;width:301px;height:19px;background:#fff;"></div>
<div style="left:0px;top:114px;width:301px;height:19px;background:#f0f0f0;"></div>
<div style="left:0px;top:133px;width:301px;height:19px;background:#fff;"></div>
<div style="left:0px;top:152px;width:301px;height:19px;background:#e8ffff;"></div>
<div style="left:0px;top:171px;width:301px;height:19px;background:#e8ffff;"></div>
<div style="left:0px;top:190px;width:301px;height:19px;background:#e8ffff;"></div>
<div style="left:0px;top:209px;width:301px;height:19px;background:#e8ffff;"></div>
<div style="left:0px;top:228px;width:301px;height:19px;background:#e8ffff;"></div>
<div style="left:0px;top:247px;width:301px;height:19px;background:#e8ffff;"></div>
<div style="left:0px;top:266px;width:301px;height:19px;background:#e8ffff;"></div>
<div style="left:0px;top:285px;width:301px;height:19px;background:#fff;"></div>
<div style="left:0px;top:304px;width:301px;height:19px;background:#e8ffff;"></div>
<div style="left:0px;top:323px;width:301px;height:19px;background:#e8ffff;"></div>
<div style="left:0px;top:342px;width:301px;height:19px;background:#e8ffff;"></div>
<div style="left:0px;top:361px;width:301px;height:19px;background:#e8ffff;"></div>
<div style="left:0px;top:380px;width:301px;height:19px;background:#e8ffff;"></div>
<div style="left:0px;top:399px;width:301px;height:19px;background:#e8ffff;"></div>
<div style="left:0px;top:418px;width:301px;height:19px;background:#e8ffff;"></div>
<div style="left:0px;top:437px;width:301px;height:19px;background:#e8ffff;"></div>
<div style="left:0px;top:456px;width:301px;height:19px;background:#e8ffff;"></div>
<div style="left:0px;top:475px;width:301px;height:19px;background:#e8ffff;"></div>
<div style="left:0px;top:494px;width:301px;height:19px;background:#e8ffff;"></div>
<div style="left:0px;top:513px;width:301px;height:19px;background:#e8ffff;"></div>
<div style="left:0px;top:532px;width:301px;height:19px;background:#e8ffff;"></div>
<div style="left:0px;top:551px;width:301px;height:19px;background:#e8ffff;"></div>
<div style="left:0px;top:570px;width:301px;height:19px;background:#e8ffff;"></div>
<div style="left:0px;top:589px;width:301px;height:19px;background:#e8ffff;"></div>
<div style="left:0px;top:608px;width:301px;height:19px;background:#e8ffff;"></div>
<svg style="left:2px;top:0px" width="20" height="19" viewBox="0 0 20 19"><rect x="0" y="0" width="20" height="19" fill="#3470e0"/>
<rect x="18.8" y="0" width="1.2" height="19" fill="#3c54d4"/>
<rect x="0" y="0" width="20" height="2.8" fill="url(#fb)"/>
<rect x="1.1" y="2.8" width="17.8" height="15" fill="url(#ff)"/>
<path d="M15.2 4.8Q12.8 3.8 11.8 6.4L9.4 14.2Q8.4 16.8 5.2 16.2" fill="none" stroke="url(#fs)" stroke-width="1.5" stroke-linecap="round"/>
<path d="M7.4 8H13.8" stroke="#101848" stroke-width="1.3"/></svg>
<span class="t fn" style="left:28px;top:2px;height:19px;line-height:19px;"><span class="sim">sub_401000</span></span>
<svg style="left:2px;top:19px" width="20" height="19" viewBox="0 0 20 19"><rect x="0" y="0" width="20" height="19" fill="#3470e0"/>
<rect x="18.8" y="0" width="1.2" height="19" fill="#3c54d4"/>
<rect x="0" y="0" width="20" height="2.8" fill="url(#fb)"/>
<rect x="1.1" y="2.8" width="17.8" height="15" fill="url(#ff)"/>
<path d="M15.2 4.8Q12.8 3.8 11.8 6.4L9.4 14.2Q8.4 16.8 5.2 16.2" fill="none" stroke="url(#fs)" stroke-width="1.5" stroke-linecap="round"/>
<path d="M7.4 8H13.8" stroke="#101848" stroke-width="1.3"/></svg>
<span class="t fn" style="left:28px;top:21px;height:19px;line-height:19px;"><span class="sim">sub_401080</span></span>
<svg style="left:2px;top:38px" width="20" height="19" viewBox="0 0 20 19"><rect x="0" y="0" width="20" height="19" fill="#3470e0"/>
<rect x="18.8" y="0" width="1.2" height="19" fill="#3c54d4"/>
<rect x="0" y="0" width="20" height="2.8" fill="url(#fb)"/>
<rect x="1.1" y="2.8" width="17.8" height="15" fill="url(#ff)"/>
<path d="M15.2 4.8Q12.8 3.8 11.8 6.4L9.4 14.2Q8.4 16.8 5.2 16.2" fill="none" stroke="url(#fs)" stroke-width="1.5" stroke-linecap="round"/>
<path d="M7.4 8H13.8" stroke="#101848" stroke-width="1.3"/></svg>
<span class="t fn" style="left:28px;top:40px;height:19px;line-height:19px;"><span class="sim">sub_4010D0</span></span>
<svg style="left:2px;top:57px" width="20" height="19" viewBox="0 0 20 19"><rect x="0" y="0" width="20" height="19" fill="#3470e0"/>
<rect x="18.8" y="0" width="1.2" height="19" fill="#3c54d4"/>
<rect x="0" y="0" width="20" height="2.8" fill="url(#fb)"/>
<rect x="1.1" y="2.8" width="17.8" height="15" fill="url(#ff)"/>
<path d="M15.2 4.8Q12.8 3.8 11.8 6.4L9.4 14.2Q8.4 16.8 5.2 16.2" fill="none" stroke="url(#fs)" stroke-width="1.5" stroke-linecap="round"/>
<path d="M7.4 8H13.8" stroke="#101848" stroke-width="1.3"/></svg>
<span class="t fn" style="left:28px;top:59px;height:19px;line-height:19px;"><span class="sim">sub_401140</span></span>
<svg style="left:2px;top:76px" width="20" height="19" viewBox="0 0 20 19"><rect x="0" y="0" width="20" height="19" fill="#3470e0"/>
<rect x="18.8" y="0" width="1.2" height="19" fill="#3c54d4"/>
<rect x="0" y="0" width="20" height="2.8" fill="url(#fb)"/>
<rect x="1.1" y="2.8" width="17.8" height="15" fill="url(#ff)"/>
<path d="M15.2 4.8Q12.8 3.8 11.8 6.4L9.4 14.2Q8.4 16.8 5.2 16.2" fill="none" stroke="url(#fs)" stroke-width="1.5" stroke-linecap="round"/>
<path d="M7.4 8H13.8" stroke="#101848" stroke-width="1.3"/></svg>
<span class="t fn" style="left:28px;top:78px;height:19px;line-height:19px;"><span class="sim">sub_401220</span></span>
<svg style="left:2px;top:95px" width="20" height="19" viewBox="0 0 20 19"><rect x="0" y="0" width="20" height="19" fill="#3470e0"/>
<rect x="18.8" y="0" width="1.2" height="19" fill="#3c54d4"/>
<rect x="0" y="0" width="20" height="2.8" fill="url(#fb)"/>
<rect x="1.1" y="2.8" width="17.8" height="15" fill="url(#ff)"/>
<path d="M15.2 4.8Q12.8 3.8 11.8 6.4L9.4 14.2Q8.4 16.8 5.2 16.2" fill="none" stroke="url(#fs)" stroke-width="1.5" stroke-linecap="round"/>
<path d="M7.4 8H13.8" stroke="#101848" stroke-width="1.3"/></svg>
<span class="t fn" style="left:28px;top:97px;height:19px;line-height:19px;"><span class="sim">sub_401240</span></span>
<svg style="left:2px;top:114px" width="20" height="19" viewBox="0 0 20 19"><rect x="0" y="0" width="20" height="19" fill="#3470e0"/>
<rect x="18.8" y="0" width="1.2" height="19" fill="#3c54d4"/>
<rect x="0" y="0" width="20" height="2.8" fill="url(#fb)"/>
<rect x="1.1" y="2.8" width="17.8" height="15" fill="#b4dcff"/>
<path d="M15.2 4.8Q12.8 3.8 11.8 6.4L9.4 14.2Q8.4 16.8 5.2 16.2" fill="none" stroke="url(#fs)" stroke-width="1.5" stroke-linecap="round"/>
<path d="M7.4 8H13.8" stroke="#101848" stroke-width="1.3"/></svg>
<span class="t fn b" style="left:28px;top:116px;height:19px;line-height:19px;"><span class="sim">_main</span></span>
<svg style="left:2px;top:133px" width="20" height="19" viewBox="0 0 20 19"><rect x="0" y="0" width="20" height="19" fill="#3470e0"/>
<rect x="18.8" y="0" width="1.2" height="19" fill="#3c54d4"/>
<rect x="0" y="0" width="20" height="2.8" fill="url(#fb)"/>
<rect x="1.1" y="2.8" width="17.8" height="15" fill="url(#ff)"/>
<path d="M15.2 4.8Q12.8 3.8 11.8 6.4L9.4 14.2Q8.4 16.8 5.2 16.2" fill="none" stroke="url(#fs)" stroke-width="1.5" stroke-linecap="round"/>
<path d="M7.4 8H13.8" stroke="#101848" stroke-width="1.3"/></svg>
<span class="t fn" style="left:28px;top:135px;height:19px;line-height:19px;"><span class="sim">printf</span></span>
<svg style="left:2px;top:152px" width="20" height="19" viewBox="0 0 20 19"><rect x="0" y="0" width="20" height="19" fill="#3470e0"/>
<rect x="18.8" y="0" width="1.2" height="19" fill="#3c54d4"/>
<rect x="0" y="0" width="20" height="2.8" fill="url(#fb)"/>
<rect x="1.1" y="2.8" width="17.8" height="15" fill="url(#ff)"/>
<path d="M15.2 4.8Q12.8 3.8 11.8 6.4L9.4 14.2Q8.4 16.8 5.2 16.2" fill="none" stroke="url(#fs)" stroke-width="1.5" stroke-linecap="round"/>
<path d="M7.4 8H13.8" stroke="#101848" stroke-width="1.3"/></svg>
<span class="t fn b" style="left:28px;top:154px;height:19px;line-height:19px;"><span class="sim">_system</span></span>
<svg style="left:2px;top:171px" width="20" height="19" viewBox="0 0 20 19"><rect x="0" y="0" width="20" height="19" fill="#3470e0"/>
<rect x="18.8" y="0" width="1.2" height="19" fill="#3c54d4"/>
<rect x="0" y="0" width="20" height="2.8" fill="url(#fb)"/>
<rect x="1.1" y="2.8" width="17.8" height="15" fill="url(#ff)"/>
<path d="M15.2 4.8Q12.8 3.8 11.8 6.4L9.4 14.2Q8.4 16.8 5.2 16.2" fill="none" stroke="url(#fs)" stroke-width="1.5" stroke-linecap="round"/>
<path d="M7.4 8H13.8" stroke="#101848" stroke-width="1.3"/></svg>
<span class="t fn b" style="left:28px;top:173px;height:19px;line-height:19px;"><span class="sim">_scanf</span></span>
<svg style="left:2px;top:190px" width="20" height="19" viewBox="0 0 20 19"><rect x="0" y="0" width="20" height="19" fill="#3470e0"/>
<rect x="18.8" y="0" width="1.2" height="19" fill="#3c54d4"/>
<rect x="0" y="0" width="20" height="2.8" fill="url(#fb)"/>
<rect x="1.1" y="2.8" width="17.8" height="15" fill="url(#ff)"/>
<path d="M15.2 4.8Q12.8 3.8 11.8 6.4L9.4 14.2Q8.4 16.8 5.2 16.2" fill="none" stroke="url(#fs)" stroke-width="1.5" stroke-linecap="round"/>
<path d="M7.4 8H13.8" stroke="#101848" stroke-width="1.3"/></svg>
<span class="t fn" style="left:28px;top:192px;height:19px;line-height:19px;"><span class="sim">start</span></span>
<svg style="left:2px;top:209px" width="20" height="19" viewBox="0 0 20 19"><rect x="0" y="0" width="20" height="19" fill="#3470e0"/>
<rect x="18.8" y="0" width="1.2" height="19" fill="#3c54d4"/>
<rect x="0" y="0" width="20" height="2.8" fill="url(#fb)"/>
<rect x="1.1" y="2.8" width="17.8" height="15" fill="url(#ff)"/>
<path d="M15.2 4.8Q12.8 3.8 11.8 6.4L9.4 14.2Q8.4 16.8 5.2 16.2" fill="none" stroke="url(#fs)" stroke-width="1.5" stroke-linecap="round"/>
<path d="M7.4 8H13.8" stroke="#101848" stroke-width="1.3"/></svg>
<span class="t fn" style="left:28px;top:211px;height:19px;line-height:19px;"><span class="sim">__amsg_exit</span></span>
<svg style="left:2px;top:228px" width="20" height="19" viewBox="0 0 20 19"><rect x="0" y="0" width="20" height="19" fill="#3470e0"/>
<rect x="18.8" y="0" width="1.2" height="19" fill="#3c54d4"/>
<rect x="0" y="0" width="20" height="2.8" fill="url(#fb)"/>
<rect x="1.1" y="2.8" width="17.8" height="15" fill="url(#ff)"/>
<path d="M15.2 4.8Q12.8 3.8 11.8 6.4L9.4 14.2Q8.4 16.8 5.2 16.2" fill="none" stroke="url(#fs)" stroke-width="1.5" stroke-linecap="round"/>
<path d="M7.4 8H13.8" stroke="#101848" stroke-width="1.3"/></svg>
<span class="t fn" style="left:28px;top:230px;height:19px;line-height:19px;"><span class="sim">_fast_error_exit</span></span>
<svg style="left:2px;top:247px" width="20" height="19" viewBox="0 0 20 19"><rect x="0" y="0" width="20" height="19" fill="#3470e0"/>
<rect x="18.8" y="0" width="1.2" height="19" fill="#3c54d4"/>
<rect x="0" y="0" width="20" height="2.8" fill="url(#fb)"/>
<rect x="1.1" y="2.8" width="17.8" height="15" fill="url(#ff)"/>
<path d="M15.2 4.8Q12.8 3.8 11.8 6.4L9.4 14.2Q8.4 16.8 5.2 16.2" fill="none" stroke="url(#fs)" stroke-width="1.5" stroke-linecap="round"/>
<path d="M7.4 8H13.8" stroke="#101848" stroke-width="1.3"/></svg>
<span class="t fn" style="left:28px;top:249px;height:19px;line-height:19px;"><span class="sim">__stbuf</span></span>
<svg style="left:2px;top:266px" width="20" height="19" viewBox="0 0 20 19"><rect x="0" y="0" width="20" height="19" fill="#3470e0"/>
<rect x="18.8" y="0" width="1.2" height="19" fill="#3c54d4"/>
<rect x="0" y="0" width="20" height="2.8" fill="url(#fb)"/>
<rect x="1.1" y="2.8" width="17.8" height="15" fill="url(#ff)"/>
<path d="M15.2 4.8Q12.8 3.8 11.8 6.4L9.4 14.2Q8.4 16.8 5.2 16.2" fill="none" stroke="url(#fs)" stroke-width="1.5" stroke-linecap="round"/>
<path d="M7.4 8H13.8" stroke="#101848" stroke-width="1.3"/></svg>
<span class="t fn" style="left:28px;top:268px;height:19px;line-height:19px;"><span class="sim">__ftbuf</span></span>
<svg style="left:2px;top:285px" width="20" height="19" viewBox="0 0 20 19"><rect x="0" y="0" width="20" height="19" fill="#3470e0"/>
<rect x="18.8" y="0" width="1.2" height="19" fill="#3c54d4"/>
<rect x="0" y="0" width="20" height="2.8" fill="url(#fb)"/>
<rect x="1.1" y="2.8" width="17.8" height="15" fill="url(#ff)"/>
<path d="M15.2 4.8Q12.8 3.8 11.8 6.4L9.4 14.2Q8.4 16.8 5.2 16.2" fill="none" stroke="url(#fs)" stroke-width="1.5" stroke-linecap="round"/>
<path d="M7.4 8H13.8" stroke="#101848" stroke-width="1.3"/></svg>
<span class="t fn" style="left:28px;top:287px;height:19px;line-height:19px;"><span class="sim">sub_401640</span></span>
<svg style="left:2px;top:304px" width="20" height="19" viewBox="0 0 20 19"><rect x="0" y="0" width="20" height="19" fill="#3470e0"/>
<rect x="18.8" y="0" width="1.2" height="19" fill="#3c54d4"/>
<rect x="0" y="0" width="20" height="2.8" fill="url(#fb)"/>
<rect x="1.1" y="2.8" width="17.8" height="15" fill="url(#ff)"/>
<path d="M15.2 4.8Q12.8 3.8 11.8 6.4L9.4 14.2Q8.4 16.8 5.2 16.2" fill="none" stroke="url(#fs)" stroke-width="1.5" stroke-linecap="round"/>
<path d="M7.4 8H13.8" stroke="#101848" stroke-width="1.3"/></svg>
<span class="t fn" style="left:28px;top:306px;height:19px;line-height:19px;"><span class="sim">_write_char</span></span>
<svg style="left:2px;top:323px" width="20" height="19" viewBox="0 0 20 19"><rect x="0" y="0" width="20" height="19" fill="#3470e0"/>
<rect x="18.8" y="0" width="1.2" height="19" fill="#3c54d4"/>
<rect x="0" y="0" width="20" height="2.8" fill="url(#fb)"/>
<rect x="1.1" y="2.8" width="17.8" height="15" fill="url(#ff)"/>
<path d="M15.2 4.8Q12.8 3.8 11.8 6.4L9.4 14.2Q8.4 16.8 5.2 16.2" fill="none" stroke="url(#fs)" stroke-width="1.5" stroke-linecap="round"/>
<path d="M7.4 8H13.8" stroke="#101848" stroke-width="1.3"/></svg>
<span class="t fn" style="left:28px;top:325px;height:19px;line-height:19px;"><span class="sim">_write_multi_char</span></span>
<svg style="left:2px;top:342px" width="20" height="19" viewBox="0 0 20 19"><rect x="0" y="0" width="20" height="19" fill="#3470e0"/>
<rect x="18.8" y="0" width="1.2" height="19" fill="#3c54d4"/>
<rect x="0" y="0" width="20" height="2.8" fill="url(#fb)"/>
<rect x="1.1" y="2.8" width="17.8" height="15" fill="url(#ff)"/>
<path d="M15.2 4.8Q12.8 3.8 11.8 6.4L9.4 14.2Q8.4 16.8 5.2 16.2" fill="none" stroke="url(#fs)" stroke-width="1.5" stroke-linecap="round"/>
<path d="M7.4 8H13.8" stroke="#101848" stroke-width="1.3"/></svg>
<span class="t fn" style="left:28px;top:344px;height:19px;line-height:19px;"><span class="sim">_write_string</span></span>
<svg style="left:2px;top:361px" width="20" height="19" viewBox="0 0 20 19"><rect x="0" y="0" width="20" height="19" fill="#3470e0"/>
<rect x="18.8" y="0" width="1.2" height="19" fill="#3c54d4"/>
<rect x="0" y="0" width="20" height="2.8" fill="url(#fb)"/>
<rect x="1.1" y="2.8" width="17.8" height="15" fill="url(#ff)"/>
<path d="M15.2 4.8Q12.8 3.8 11.8 6.4L9.4 14.2Q8.4 16.8 5.2 16.2" fill="none" stroke="url(#fs)" stroke-width="1.5" stroke-linecap="round"/>
<path d="M7.4 8H13.8" stroke="#101848" stroke-width="1.3"/></svg>
<span class="t fn" style="left:28px;top:363px;height:19px;line-height:19px;"><span class="sim">_get_int_arg</span></span>
<svg style="left:2px;top:380px" width="20" height="19" viewBox="0 0 20 19"><rect x="0" y="0" width="20" height="19" fill="#3470e0"/>
<rect x="18.8" y="0" width="1.2" height="19" fill="#3c54d4"/>
<rect x="0" y="0" width="20" height="2.8" fill="url(#fb)"/>
<rect x="1.1" y="2.8" width="17.8" height="15" fill="url(#ff)"/>
<path d="M15.2 4.8Q12.8 3.8 11.8 6.4L9.4 14.2Q8.4 16.8 5.2 16.2" fill="none" stroke="url(#fs)" stroke-width="1.5" stroke-linecap="round"/>
<path d="M7.4 8H13.8" stroke="#101848" stroke-width="1.3"/></svg>
<span class="t fn" style="left:28px;top:382px;height:19px;line-height:19px;"><span class="sim">_get_int64_arg</span></span>
<svg style="left:2px;top:399px" width="20" height="19" viewBox="0 0 20 19"><rect x="0" y="0" width="20" height="19" fill="#3470e0"/>
<rect x="18.8" y="0" width="1.2" height="19" fill="#3c54d4"/>
<rect x="0" y="0" width="20" height="2.8" fill="url(#fb)"/>
<rect x="1.1" y="2.8" width="17.8" height="15" fill="url(#ff)"/>
<path d="M15.2 4.8Q12.8 3.8 11.8 6.4L9.4 14.2Q8.4 16.8 5.2 16.2" fill="none" stroke="url(#fs)" stroke-width="1.5" stroke-linecap="round"/>
<path d="M7.4 8H13.8" stroke="#101848" stroke-width="1.3"/></svg>
<span class="t fn" style="left:28px;top:401px;height:19px;line-height:19px;"><span class="sim">_get_short_arg</span></span>
<svg style="left:2px;top:418px" width="20" height="19" viewBox="0 0 20 19"><rect x="0" y="0" width="20" height="19" fill="#3470e0"/>
<rect x="18.8" y="0" width="1.2" height="19" fill="#3c54d4"/>
<rect x="0" y="0" width="20" height="2.8" fill="url(#fb)"/>
<rect x="1.1" y="2.8" width="17.8" height="15" fill="url(#ff)"/>
<path d="M15.2 4.8Q12.8 3.8 11.8 6.4L9.4 14.2Q8.4 16.8 5.2 16.2" fill="none" stroke="url(#fs)" stroke-width="1.5" stroke-linecap="round"/>
<path d="M7.4 8H13.8" stroke="#101848" stroke-width="1.3"/></svg>
<span class="t fn" style="left:28px;top:420px;height:19px;line-height:19px;"><span class="sim">___initstdio</span></span>
<svg style="left:2px;top:437px" width="20" height="19" viewBox="0 0 20 19"><rect x="0" y="0" width="20" height="19" fill="#3470e0"/>
<rect x="18.8" y="0" width="1.2" height="19" fill="#3c54d4"/>
<rect x="0" y="0" width="20" height="2.8" fill="url(#fb)"/>
<rect x="1.1" y="2.8" width="17.8" height="15" fill="url(#ff)"/>
<path d="M15.2 4.8Q12.8 3.8 11.8 6.4L9.4 14.2Q8.4 16.8 5.2 16.2" fill="none" stroke="url(#fs)" stroke-width="1.5" stroke-linecap="round"/>
<path d="M7.4 8H13.8" stroke="#101848" stroke-width="1.3"/></svg>
<span class="t fn" style="left:28px;top:439px;height:19px;line-height:19px;"><span class="sim">___endstdio</span></span>
<svg style="left:2px;top:456px" width="20" height="19" viewBox="0 0 20 19"><rect x="0" y="0" width="20" height="19" fill="#3470e0"/>
<rect x="18.8" y="0" width="1.2" height="19" fill="#3c54d4"/>
<rect x="0" y="0" width="20" height="2.8" fill="url(#fb)"/>
<rect x="1.1" y="2.8" width="17.8" height="15" fill="url(#ff)"/>
<path d="M15.2 4.8Q12.8 3.8 11.8 6.4L9.4 14.2Q8.4 16.8 5.2 16.2" fill="none" stroke="url(#fs)" stroke-width="1.5" stroke-linecap="round"/>
<path d="M7.4 8H13.8" stroke="#101848" stroke-width="1.3"/></svg>
<span class="t fn b" style="left:28px;top:458px;height:19px;line-height:19px;"><span class="sim">__spawnvpe</span></span>
<svg style="left:2px;top:475px" width="20" height="19" viewBox="0 0 20 19"><rect x="0" y="0" width="20" height="19" fill="#3470e0"/>
<rect x="18.8" y="0" width="1.2" height="19" fill="#3c54d4"/>
<rect x="0" y="0" width="20" height="2.8" fill="url(#fb)"/>
<rect x="1.1" y="2.8" width="17.8" height="15" fill="url(#ff)"/>
<path d="M15.2 4.8Q12.8 3.8 11.8 6.4L9.4 14.2Q8.4 16.8 5.2 16.2" fill="none" stroke="url(#fs)" stroke-width="1.5" stroke-linecap="round"/>
<path d="M7.4 8H13.8" stroke="#101848" stroke-width="1.3"/></svg>
<span class="t fn" style="left:28px;top:477px;height:19px;line-height:19px;"><span class="sim">__cinit</span></span>
<svg style="left:2px;top:494px" width="20" height="19" viewBox="0 0 20 19"><rect x="0" y="0" width="20" height="19" fill="#3470e0"/>
<rect x="18.8" y="0" width="1.2" height="19" fill="#3c54d4"/>
<rect x="0" y="0" width="20" height="2.8" fill="url(#fb)"/>
<rect x="1.1" y="2.8" width="17.8" height="15" fill="url(#ff)"/>
<path d="M15.2 4.8Q12.8 3.8 11.8 6.4L9.4 14.2Q8.4 16.8 5.2 16.2" fill="none" stroke="url(#fs)" stroke-width="1.5" stroke-linecap="round"/>
<path d="M7.4 8H13.8" stroke="#101848" stroke-width="1.3"/></svg>
<span class="t fn b" style="left:28px;top:496px;height:19px;line-height:19px;"><span class="sim">_exit</span></span>
<svg style="left:2px;top:513px" width="20" height="19" viewBox="0 0 20 19"><rect x="0" y="0" width="20" height="19" fill="#3470e0"/>
<rect x="18.8" y="0" width="1.2" height="19" fill="#3c54d4"/>
<rect x="0" y="0" width="20" height="2.8" fill="url(#fb)"/>
<rect x="1.1" y="2.8" width="17.8" height="15" fill="url(#ff)"/>
<path d="M15.2 4.8Q12.8 3.8 11.8 6.4L9.4 14.2Q8.4 16.8 5.2 16.2" fill="none" stroke="url(#fs)" stroke-width="1.5" stroke-linecap="round"/>
<path d="M7.4 8H13.8" stroke="#101848" stroke-width="1.3"/></svg>
<span class="t fn b" style="left:28px;top:515px;height:19px;line-height:19px;"><span class="sim">__exit</span></span>
<svg style="left:2px;top:532px" width="20" height="19" viewBox="0 0 20 19"><rect x="0" y="0" width="20" height="19" fill="#3470e0"/>
<rect x="18.8" y="0" width="1.2" height="19" fill="#3c54d4"/>
<rect x="0" y="0" width="20" height="2.8" fill="url(#fb)"/>
<rect x="1.1" y="2.8" width="17.8" height="15" fill="url(#ff)"/>
<path d="M15.2 4.8Q12.8 3.8 11.8 6.4L9.4 14.2Q8.4 16.8 5.2 16.2" fill="none" stroke="url(#fs)" stroke-width="1.5" stroke-linecap="round"/>
<path d="M7.4 8H13.8" stroke="#101848" stroke-width="1.3"/></svg>
<span class="t fn" style="left:28px;top:534px;height:19px;line-height:19px;"><span class="sim">_doexit</span></span>
<svg style="left:2px;top:551px" width="20" height="19" viewBox="0 0 20 19"><rect x="0" y="0" width="20" height="19" fill="#3470e0"/>
<rect x="18.8" y="0" width="1.2" height="19" fill="#3c54d4"/>
<rect x="0" y="0" width="20" height="2.8" fill="url(#fb)"/>
<rect x="1.1" y="2.8" width="17.8" height="15" fill="url(#ff)"/>
<path d="M15.2 4.8Q12.8 3.8 11.8 6.4L9.4 14.2Q8.4 16.8 5.2 16.2" fill="none" stroke="url(#fs)" stroke-width="1.5" stroke-linecap="round"/>
<path d="M7.4 8H13.8" stroke="#101848" stroke-width="1.3"/></svg>
<span class="t fn b" style="left:28px;top:553px;height:19px;line-height:19px;"><span class="sim">__initterm</span></span>
<svg style="left:2px;top:570px" width="20" height="19" viewBox="0 0 20 19"><rect x="0" y="0" width="20" height="19" fill="#3470e0"/>
<rect x="18.8" y="0" width="1.2" height="19" fill="#3c54d4"/>
<rect x="0" y="0" width="20" height="2.8" fill="url(#fb)"/>
<rect x="1.1" y="2.8" width="17.8" height="15" fill="url(#ff)"/>
<path d="M15.2 4.8Q12.8 3.8 11.8 6.4L9.4 14.2Q8.4 16.8 5.2 16.2" fill="none" stroke="url(#fs)" stroke-width="1.5" stroke-linecap="round"/>
<path d="M7.4 8H13.8" stroke="#101848" stroke-width="1.3"/></svg>
<span class="t fn b" style="left:28px;top:572px;height:19px;line-height:19px;"><span class="sim">__spawnve</span></span>
<svg style="left:2px;top:589px" width="20" height="19" viewBox="0 0 20 19"><rect x="0" y="0" width="20" height="19" fill="#3470e0"/>
<rect x="18.8" y="0" width="1.2" height="19" fill="#3c54d4"/>
<rect x="0" y="0" width="20" height="2.8" fill="url(#fb)"/>
<rect x="1.1" y="2.8" width="17.8" height="15" fill="url(#ff)"/>
<path d="M15.2 4.8Q12.8 3.8 11.8 6.4L9.4 14.2Q8.4 16.8 5.2 16.2" fill="none" stroke="url(#fs)" stroke-width="1.5" stroke-linecap="round"/>
<path d="M7.4 8H13.8" stroke="#101848" stroke-width="1.3"/></svg>
<span class="t fn" style="left:28px;top:591px;height:19px;line-height:19px;"><span class="sim">_comexecmd</span></span>
<svg style="left:2px;top:608px" width="20" height="19" viewBox="0 0 20 19"><rect x="0" y="0" width="20" height="19" fill="#3470e0"/>
<rect x="18.8" y="0" width="1.2" height="19" fill="#3c54d4"/>
<rect x="0" y="0" width="20" height="2.8" fill="url(#fb)"/>
<rect x="1.1" y="2.8" width="17.8" height="15" fill="url(#ff)"/>
<path d="M15.2 4.8Q12.8 3.8 11.8 6.4L9.4 14.2Q8.4 16.8 5.2 16.2" fill="none" stroke="url(#fs)" stroke-width="1.5" stroke-linecap="round"/>
<path d="M7.4 8H13.8" stroke="#101848" stroke-width="1.3"/></svg>
<span class="t fn b" style="left:28px;top:610px;height:19px;line-height:19px;"><span class="sim">__access</span></span>
</div>
<div style="left:304px;top:168px;width:19px;height:653px;background:#f0f0f0;"></div>
<div style="left:304px;top:189px;width:19px;height:131px;background:#cdcdcd;"></div>
<svg style="left:308px;top:175.5px" width="11" height="7" viewBox="0 0 11 7"><path d="M1 6L5.5 1.5L10 6" fill="none" stroke="#505050" stroke-width="1.6"/></svg>
<svg style="left:308px;top:805px" width="11" height="7" viewBox="0 0 11 7"><path d="M1 1L5.5 5.5L10 1" fill="none" stroke="#505050" stroke-width="1.6"/></svg>
<div style="left:3px;top:820px;width:320px;height:21px;background:#f0f0f0;"></div>
<div style="left:23px;top:822px;width:65px;height:17px;background:#cdcdcd;"></div>
<svg style="left:8px;top:825px" width="7" height="11" viewBox="0 0 7 11"><path d="M6 1L1.5 5.5L6 10" fill="none" stroke="#505050" stroke-width="1.6"/></svg>
<svg style="left:289px;top:825px" width="7" height="11" viewBox="0 0 7 11"><path d="M1 1L5.5 5.5L1 10" fill="none" stroke="#505050" stroke-width="1.6"/></svg>
<span class="t cjs" style="left:7px;top:848px;height:15px;line-height:15px;font-size:15px;">行</span>
<span class="t sans" style="left:26.5px;top:845px;height:20px;line-height:20px;font-size:15px;letter-spacing:0.8px;">7/149</span>
<span class="t mono" style="left:3px;top:870px;height:20px;line-height:20px;font-size:13px;letter-spacing:1.2px;">AU:  idle</span>
<span class="t mono" style="left:108px;top:870px;height:20px;line-height:20px;font-size:13px;letter-spacing:1.2px;">Down</span>
<span class="t cjf" style="left:184.5px;top:872px;height:14px;line-height:14px;font-size:14px;">磁盘</span>
<span class="t mono" style="left:213px;top:870px;height:20px;line-height:20px;font-size:13px;letter-spacing:1.2px;">: 33GB</span>
<div style="left:103px;top:869px;width:1px;height:19px;background:#d0d0d0;"></div>
<div style="left:179px;top:869px;width:1px;height:19px;background:#d0d0d0;"></div>
<div style="left:269px;top:869px;width:1px;height:19px;background:#d0d0d0;"></div>
<div style="left:329px;top:162px;width:152px;height:1px;background:#9a9a9a;"></div>
<div style="left:655px;top:162px;width:970px;height:1px;background:#c4c4c4;"></div>
<div style="left:331px;top:137px;width:150px;height:25px;background:#f0f0f0;border:1px solid #d9d9d9;border-bottom:none;border-right:none;"></div>
<svg style="left:344px;top:141px" width="17" height="17" viewBox="0 0 17 17"><rect x="0.5" y="0.5" width="10" height="12" fill="#d8ecff" stroke="#3080e0"/><rect x="0.5" y="0.5" width="10" height="2.5" fill="#38a0f0"/><rect x="5.5" y="3.5" width="11" height="13" fill="#fff" stroke="#2050a0"/><path d="M8 7H14M9 9.5H14M8 12H14M9 14.5H13" stroke="#406090" stroke-width="0.9"/></svg>
<span class="t mono" style="left:365px;top:143px;height:20px;line-height:20px;font-size:13.33px;"><span class="sim">IDA View-A</span></span>
<svg style="left:450px;top:143px" width="14" height="14" viewBox="0 0 14 14"><rect x="0.5" y="0.5" width="13" height="13" rx="2" fill="#c8c8c8" stroke="#a8a8a8"/><path d="M4 4L10 10M10 4L4 10" stroke="#fff" stroke-width="1.8"/></svg>
<div style="left:655px;top:137px;width:224px;height:25px;background:#f0f0f0;border:1px solid #d9d9d9;border-bottom:none;border-right:none;"></div>
<svg style="left:668px;top:141px" width="16" height="16" viewBox="0 0 16 16"><rect x="0.5" y="0.5" width="15" height="15" fill="#fff" stroke="#2860d0"/><rect x="1" y="1" width="14" height="2.5" fill="#40a0f0"/><path d="M4 5H11L13 6.2L11 7.4H4ZM4 8H11L13 9.2L11 10.4H4ZM4 11H11L13 12.2L11 13.4H4Z" fill="#1030e0"/><path d="M4.5 7.7H11M4.5 10.7H11" stroke="#a0f0ff" stroke-width="0.6"/></svg>
<span class="t mono" style="left:688px;top:143px;height:20px;line-height:20px;font-size:13.33px;"><span class="sim">Stack of sub_401240</span></span>
<svg style="left:846px;top:143px" width="14" height="14" viewBox="0 0 14 14"><rect x="0.5" y="0.5" width="13" height="13" rx="2" fill="#c8c8c8" stroke="#a8a8a8"/><path d="M4 4L10 10M10 4L4 10" stroke="#fff" stroke-width="1.8"/></svg>
<div style="left:879px;top:137px;width:147px;height:25px;background:#f0f0f0;border:1px solid #d9d9d9;border-bottom:none;border-right:none;"></div>
<svg style="left:894px;top:141px" width="16" height="16" viewBox="0 0 16 16"><rect x="0.5" y="0.5" width="15" height="15" fill="#fff" stroke="#2860d0"/><rect x="1" y="1" width="14" height="2.5" fill="#40a0f0"/><text x="8" y="13" font-family="Liberation Serif" font-weight="bold" font-size="10" text-anchor="middle" fill="#108030">‘s’</text></svg>
<span class="t cjf" style="left:936px;top:142.5px;height:14.8px;line-height:14.8px;font-size:14.8px;">字串</span>
<svg style="left:994px;top:143px" width="14" height="14" viewBox="0 0 14 14"><rect x="0.5" y="0.5" width="13" height="13" rx="2" fill="#c8c8c8" stroke="#a8a8a8"/><path d="M4 4L10 10M10 4L4 10" stroke="#fff" stroke-width="1.8"/></svg>
<div style="left:1026px;top:137px;width:153px;height:25px;background:#f0f0f0;border:1px solid #d9d9d9;border-bottom:none;border-right:none;"></div>
<svg style="left:1041px;top:141px" width="16" height="16" viewBox="0 0 16 16"><rect x="0.5" y="0.5" width="15" height="15" fill="#fff" stroke="#2860d0"/><rect x="1" y="1" width="14" height="2.5" fill="#40a0f0"/><path d="M8 5L11.5 7V11L8 13L4.5 11V7Z" fill="#d0e0ff" stroke="#2040c0" stroke-width="1.1"/></svg>
<span class="t mono" style="left:1061px;top:143px;height:20px;line-height:20px;font-size:13.33px;"><span class="sim">Hex View-1</span></span>
<svg style="left:1148px;top:143px" width="14" height="14" viewBox="0 0 14 14"><rect x="0.5" y="0.5" width="13" height="13" rx="2" fill="#c8c8c8" stroke="#a8a8a8"/><path d="M4 4L10 10M10 4L4 10" stroke="#fff" stroke-width="1.8"/></svg>
<div style="left:1179px;top:137px;width:150px;height:25px;background:#f0f0f0;border:1px solid #d9d9d9;border-bottom:none;border-right:none;"></div>
<svg style="left:1196px;top:141px" width="16" height="16" viewBox="0 0 16 16"><rect x="0.5" y="0.5" width="15" height="15" fill="#fff" stroke="#2860d0"/><rect x="1" y="1" width="14" height="2.5" fill="#40a0f0"/><path d="M4 6H5.5M4 9H5.5M4 12H5.5" stroke="#2040c0" stroke-width="1.6"/><path d="M7 6H12M7 9H12M7 12H12" stroke="#6080b0" stroke-width="1"/></svg>
<span class="t mono" style="left:1232px;top:143px;height:20px;line-height:20px;font-size:13.33px;"><span class="sim">Enums</span></span>
<svg style="left:1297px;top:143px" width="14" height="14" viewBox="0 0 14 14"><rect x="0.5" y="0.5" width="13" height="13" rx="2" fill="#c8c8c8" stroke="#a8a8a8"/><path d="M4 4L10 10M10 4L4 10" stroke="#fff" stroke-width="1.8"/></svg>
<div style="left:1329px;top:137px;width:148px;height:25px;background:#f0f0f0;border:1px solid #d9d9d9;border-bottom:none;border-right:none;"></div>
<svg style="left:1345px;top:141px" width="16" height="16" viewBox="0 0 16 16"><rect x="0.5" y="0.5" width="13" height="10" fill="#e8f4ff" stroke="#2868d8"/><rect x="1" y="1" width="12" height="2.5" fill="#40a0f0"/><rect x="5.5" y="5.5" width="10" height="10" fill="#fff" stroke="#2048a0"/><path d="M8 8.5H14M8 10.5H14M8 12.5H14" stroke="#3050b0" stroke-width="0.9"/><path d="M1 4.5L4 4.5L4 3L7.5 6.5L4 10V8.2H1Z" fill="#20a838" stroke="#0c6018" stroke-width="0.5"/></svg>
<span class="t mono" style="left:1374px;top:143px;height:20px;line-height:20px;font-size:13.33px;"><span class="sim">Imports</span></span>
<svg style="left:1445px;top:143px" width="14" height="14" viewBox="0 0 14 14"><rect x="0.5" y="0.5" width="13" height="13" rx="2" fill="#c8c8c8" stroke="#a8a8a8"/><path d="M4 4L10 10M10 4L4 10" stroke="#fff" stroke-width="1.8"/></svg>
<div style="left:1477px;top:137px;width:148px;height:25px;background:#f0f0f0;border:1px solid #d9d9d9;border-bottom:none;border-right:none;"></div>
<svg style="left:1493px;top:141px" width="16" height="16" viewBox="0 0 16 16"><rect x="0.5" y="0.5" width="15" height="15" fill="#fff" stroke="#2860d0"/><rect x="1" y="1" width="14" height="2.5" fill="#40a0f0"/><path d="M3 8H7M3 10.5H8M3 13H8" stroke="#2848b0" stroke-width="1.1"/><path d="M7.5 7.2H10.5V5L14.8 8.6L10.5 12.2V10H7.5Z" fill="#20a838" stroke="#0c6018" stroke-width="0.5"/></svg>
<span class="t mono" style="left:1522px;top:143px;height:20px;line-height:20px;font-size:13.33px;"><span class="sim">Exports</span></span>
<svg style="left:1593px;top:143px" width="14" height="14" viewBox="0 0 14 14"><rect x="0.5" y="0.5" width="13" height="13" rx="2" fill="#c8c8c8" stroke="#a8a8a8"/><path d="M4 4L10 10M10 4L4 10" stroke="#fff" stroke-width="1.8"/></svg>
<div style="left:481px;top:135px;width:174px;height:29px;background:#fff;border:1px solid #d9d9d9;border-bottom:none;"></div>
<svg style="left:498px;top:140px" width="17" height="17" viewBox="0 0 17 17"><rect x="0.5" y="0.5" width="10" height="12" fill="#d8ecff" stroke="#3080e0"/><rect x="0.5" y="0.5" width="10" height="2.5" fill="#38a0f0"/><rect x="5.5" y="3.5" width="11" height="13" fill="#fff" stroke="#2050a0"/><path d="M8 7H14M9 9.5H14M8 12H14M9 14.5H13" stroke="#406090" stroke-width="0.9"/></svg>
<span class="t mono" style="left:517px;top:142px;height:20px;line-height:20px;font-size:13.33px;"><span class="sim">Pseudocode-A</span></span>
<svg style="left:620px;top:142px" width="14" height="14" viewBox="0 0 14 14"><rect x="0.5" y="0.5" width="13" height="13" rx="2" fill="#e86040" stroke="#c03818"/><path d="M4 4L10 10M10 4L4 10" stroke="#fff" stroke-width="1.8"/></svg>
<div style="left:329px;top:163px;width:51px;height:704px;background:#fff;"></div>
<div style="left:375px;top:163px;width:5px;height:704px;background:#f0f0f0;"></div>
<div style="left:379px;top:163px;width:1246px;height:704px;background:#fff;border:1px solid #0078d7;border-right:none;"></div>
<div style="left:380px;top:384px;width:1245px;height:20px;background:#e6e6e6;"></div>
<div style="left:380px;top:844px;width:1245px;height:22px;background:#f0f0f0;"></div>
<span class="t code" style="left:380px;top:166px;height:20px;line-height:20px;"><span class="g">int __cdecl sub_401240(const char *flag, _DWORD *a2)</span></span>
<span class="t code" style="left:331px;top:166px;height:20px;line-height:20px;width:42px;text-align:right;color:#808080;">1</span>
<span class="t code" style="left:380px;top:186px;height:20px;line-height:20px;"><span class="n">{</span></span>
<span class="t code" style="left:331px;top:186px;height:20px;line-height:20px;width:42px;text-align:right;color:#808080;">2</span>
<span class="t code" style="left:380px;top:206px;height:20px;line-height:20px;"><span class="g">  int result; </span><span class="c">// </span><span class="l">eax</span></span>
<span class="t code" style="left:331px;top:206px;height:20px;line-height:20px;width:42px;text-align:right;color:#808080;">3</span>
<span class="t code" style="left:380px;top:226px;height:20px;line-height:20px;"><span class="n">  unsigned int v3; </span><span class="c">// </span><span class="l">kr04_4</span></span>
<span class="t code" style="left:331px;top:226px;height:20px;line-height:20px;width:42px;text-align:right;color:#808080;">4</span>
<span class="t code" style="left:380px;top:246px;height:20px;line-height:20px;"><span class="g">  char v4</span><span class="n">[24]; </span><span class="c">// </span><span class="l">[esp+Ch] [ebp-18h] BYREF</span></span>
<span class="t code" style="left:331px;top:246px;height:20px;line-height:20px;width:42px;text-align:right;color:#808080;">5</span>
<span class="t code" style="left:380px;top:266px;height:20px;line-height:20px;"></span>
<span class="t code" style="left:331px;top:266px;height:20px;line-height:20px;width:42px;text-align:right;color:#808080;">6</span>
<span class="t code" style="left:380px;top:286px;height:20px;line-height:20px;"><span class="l">  result</span><span class="n"> = 0;</span></span>
<span class="t code" style="left:331px;top:286px;height:20px;line-height:20px;width:42px;text-align:right;color:#808080;">7</span>
<div style="left:336px;top:288px;width:11px;height:11px;border-radius:6px;background:#5accff;"></div>
<span class="t code" style="left:380px;top:306px;height:20px;line-height:20px;"><span class="n">  strcpy(</span><span class="l">v4</span><span class="n">, "</span><span class="s">This_is_not_the_flag</span><span class="n">");</span></span>
<span class="t code" style="left:331px;top:306px;height:20px;line-height:20px;width:42px;text-align:right;color:#808080;">8</span>
<div style="left:336px;top:308px;width:11px;height:11px;border-radius:6px;background:#5accff;"></div>
<span class="t code" style="left:380px;top:326px;height:20px;line-height:20px;"><span class="l">  v3</span><span class="n"> = strlen(</span><span class="l">flag</span><span class="n">) + 1;                        </span><span class="s">// v3=20</span></span>
<span class="t code" style="left:331px;top:326px;height:20px;line-height:20px;width:42px;text-align:right;color:#808080;">9</span>
<div style="left:336px;top:328px;width:11px;height:11px;border-radius:6px;background:#5accff;"></div>
<span class="t code" style="left:380px;top:346px;height:20px;line-height:20px;"><span class="n">  if ( (</span><span class="g">int</span><span class="n">)(</span><span class="l">v3</span><span class="n"> - 1) &gt; 0 )</span></span>
<span class="t code" style="left:331px;top:346px;height:20px;line-height:20px;width:42px;text-align:right;color:#808080;">10</span>
<div style="left:336px;top:348px;width:11px;height:11px;border-radius:6px;background:#5accff;"></div>
<span class="t code" style="left:380px;top:366px;height:20px;line-height:20px;"><span class="n">  {</span></span>
<span class="t code" style="left:331px;top:366px;height:20px;line-height:20px;width:42px;text-align:right;color:#808080;">11</span>
<span class="t code" style="left:380px;top:386px;height:20px;line-height:20px;"><span class="n">    while ( </span><span class="l">v4</span><span class="n">[</span><span class="l">flag</span><span class="n"> - </span><span class="l">v4</span><span class="n"> + </span><span class="l">result</span><span class="n">] == </span><span class="l">v4</span><span class="n">[</span><span class="l">result</span><span class="n">] )</span></span>
<span class="t code" style="left:331px;top:386px;height:20px;line-height:20px;width:42px;text-align:right;color:#808080;">12</span>
<div style="left:336px;top:388px;width:11px;height:11px;border-radius:6px;background:#5accff;"></div>
<span class="t code" style="left:380px;top:406px;height:20px;line-height:20px;"><span class="n">    {</span></span>
<span class="t code" style="left:331px;top:406px;height:20px;line-height:20px;width:42px;text-align:right;color:#808080;">13</span>
<span class="t code" style="left:380px;top:426px;height:20px;line-height:20px;"><span class="n">      if ( ++</span><span class="l">result</span><span class="n"> &gt;= (</span><span class="g">int</span><span class="n">)(</span><span class="l">v3</span><span class="n"> - 1) )</span></span>
<span class="t code" style="left:331px;top:426px;height:20px;line-height:20px;width:42px;text-align:right;color:#808080;">14</span>
<div style="left:336px;top:428px;width:11px;height:11px;border-radius:6px;background:#5accff;"></div>
<span class="t code" style="left:380px;top:446px;height:20px;line-height:20px;"><span class="n">      {</span></span>
<span class="t code" style="left:331px;top:446px;height:20px;line-height:20px;width:42px;text-align:right;color:#808080;">15</span>
<span class="t code" style="left:380px;top:466px;height:20px;line-height:20px;"><span class="n">        if ( </span><span class="l">result</span><span class="n"> == 21 )</span></span>
<span class="t code" style="left:331px;top:466px;height:20px;line-height:20px;width:42px;text-align:right;color:#808080;">16</span>
<div style="left:336px;top:468px;width:11px;height:11px;border-radius:6px;background:#5accff;"></div>
<span class="t code" style="left:380px;top:486px;height:20px;line-height:20px;"><span class="n">        {</span></span>
<span class="t code" style="left:331px;top:486px;height:20px;line-height:20px;width:42px;text-align:right;color:#808080;">17</span>
<span class="t code" style="left:380px;top:506px;height:20px;line-height:20px;"><span class="l">          result</span><span class="n"> = (</span><span class="g">int</span><span class="n">)</span><span class="l">a2</span><span class="n">;</span></span>
<span class="t code" style="left:331px;top:506px;height:20px;line-height:20px;width:42px;text-align:right;color:#808080;">18</span>
<div style="left:336px;top:508px;width:11px;height:11px;border-radius:6px;background:#5accff;"></div>
<span class="t code" style="left:380px;top:526px;height:20px;line-height:20px;"><span class="n">          *</span><span class="l">a2</span><span class="n"> = 1;</span></span>
<span class="t code" style="left:331px;top:526px;height:20px;line-height:20px;width:42px;text-align:right;color:#808080;">19</span>
<div style="left:336px;top:528px;width:11px;height:11px;border-radius:6px;background:#5accff;"></div>
<span class="t code" style="left:380px;top:546px;height:20px;line-height:20px;"><span class="n">        }</span></span>
<span class="t code" style="left:331px;top:546px;height:20px;line-height:20px;width:42px;text-align:right;color:#808080;">20</span>
<span class="t code" style="left:380px;top:566px;height:20px;line-height:20px;"><span class="n">        return </span><span class="l">result</span><span class="n">;</span></span>
<span class="t code" style="left:331px;top:566px;height:20px;line-height:20px;width:42px;text-align:right;color:#808080;">21</span>
<div style="left:336px;top:568px;width:11px;height:11px;border-radius:6px;background:#5accff;"></div>
<span class="t code" style="left:380px;top:586px;height:20px;line-height:20px;"><span class="n">      }</span></span>
<span class="t code" style="left:331px;top:586px;height:20px;line-height:20px;width:42px;text-align:right;color:#808080;">22</span>
<span class="t code" style="left:380px;top:606px;height:20px;line-height:20px;"><span class="n">    }</span></span>
<span class="t code" style="left:331px;top:606px;height:20px;line-height:20px;width:42px;text-align:right;color:#808080;">23</span>
<span class="t code" style="left:380px;top:626px;height:20px;line-height:20px;"><span class="n">  }</span></span>
<span class="t code" style="left:331px;top:626px;height:20px;line-height:20px;width:42px;text-align:right;color:#808080;">24</span>
<span class="t code" style="left:380px;top:646px;height:20px;line-height:20px;"><span class="n">  return </span><span class="l">result</span><span class="n">;</span></span>
<span class="t code" style="left:331px;top:646px;height:20px;line-height:20px;width:42px;text-align:right;color:#808080;">25</span>
<div style="left:336px;top:648px;width:11px;height:11px;border-radius:6px;background:#5accff;"></div>
<span class="t code" style="left:380px;top:666px;height:20px;line-height:20px;"><span class="n">}</span></span>
<span class="t code" style="left:331px;top:666px;height:20px;line-height:20px;width:42px;text-align:right;color:#808080;">26</span>
<div style="left:336px;top:668px;width:11px;height:11px;border-radius:6px;background:#5accff;"></div>
<span class="t mono" style="left:383px;top:846px;height:20px;line-height:20px;font-size:14.75px;">0000127E</span>
<span class="t mono" style="left:461px;top:846px;height:20px;line-height:20px;font-size:14.75px;">sub_401240:12 (40127E)</span>
<div style="left:456px;top:846px;width:1px;height:17px;background:#d0d0d0;"></div>
<div style="left:659px;top:846px;width:1px;height:17px;background:#d0d0d0;"></div>
<div style="left:674px;top:846px;width:1px;height:17px;background:#d0d0d0;"></div>
<div style="left:0px;top:889px;width:1625px;height:50px;background:#030b10;"></div>
<div style="left:0px;top:889px;width:1px;height:50px;background:#6a7074;"></div>
<svg style="left:21px;top:904px" width="20" height="20" viewBox="0 0 20 20"><path d="M0 2.8L8.2 1.7V9.5H0ZM9.2 1.5L20 0V9.5H9.2ZM0 10.5H8.2V18.3L0 17.2ZM9.2 10.5H20V20L9.2 18.5Z" fill="#fff"/></svg>
<svg style="left:80px;top:901.5px" width="28" height="24" viewBox="0 0 28 24"><path d="M0 0.5H11L13 2.5H27.5V22H0Z" fill="#f0c040"/><path d="M0 4.5H27.5V22.5H0Z" fill="#fbe08a"/><rect x="2.5" y="1.6" width="5.5" height="1.6" fill="#fff"/><path d="M5 14H22V23H17V18H10V23H5Z" fill="#2aa0f0"/><rect x="5" y="13" width="17" height="3" fill="#58c0ff"/></svg>
<svg style="left:141px;top:898px" width="30" height="30" viewBox="0 0 30 30"><defs><radialGradient id="fx" cx="0.6" cy="0.25" r="0.9"><stop offset="0" stop-color="#ffe040"/><stop offset="0.45" stop-color="#ff8a20"/><stop offset="0.8" stop-color="#ff3848"/><stop offset="1" stop-color="#d81870"/></radialGradient>
<radialGradient id="fp" cx="0.5" cy="0.4" r="0.6"><stop offset="0" stop-color="#9858f0"/><stop offset="1" stop-color="#5828b8"/></radialGradient></defs>
<path d="M15 2C17 0 18 0 18 0C18 3 21 4 24 7C28 11 29 16 28 20C26 27 20 30 15 30C7 30 1 24 1 16C1 12 3 9 4 8C4 10 5 11 5 11C6 7 9 5 10 5C10 7 12 8 15 8Z" fill="url(#fx)"/>
<circle cx="14.5" cy="17" r="7" fill="url(#fp)"/><path d="M6 14C8 11 12 10 15 12C12 12 10 14 10 17C10 21 14 24 19 22C15 27 6 24 6 14Z" fill="#ff9a28"/></svg>
<div style="left:188px;top:889px;width:61px;height:50px;background:#363f44;"></div>
<div style="left:188px;top:936px;width:61px;height:3px;background:#76b9ed;"></div>
<svg style="left:203.7px;top:899px" width="28.5" height="30" viewBox="0 0 28.5 30"><defs><filter id="pb1" x="-10%" y="-10%" width="120%" height="120%"><feGaussianBlur stdDeviation="0.45"/></filter>
<radialGradient id="pf1" cx="0.4" cy="0.3" r="0.8"><stop offset="0" stop-color="#f6e8d8"/><stop offset="0.6" stop-color="#e4c0a4"/><stop offset="1" stop-color="#b8805c"/></radialGradient></defs>
<g filter="url(#pb1)">
<path d="M8.3 21.8L13.6 18L17.2 19.5L20.5 25.5L27 29.8H3.8L9.3 26.6Z" fill="#ecccb4"/>
<path d="M16 19L20.5 25.5L24 28.5L22 29.8L18 26Z" fill="#b88060"/>
<ellipse cx="8.8" cy="12.6" rx="6.5" ry="8.6" transform="rotate(-8 8.8 12.6)" fill="url(#pf1)"/>
<path d="M0.6 11.5Q-0.5 5 2.4 1.8Q6 -0.6 10 0.3Q15 0.4 18.5 2.4L22.8 5.2Q27.6 7 28.2 12.6Q28 17 23 19.8L23.6 26.4L20.4 24Q17.4 20 16 16.5Q15.5 12 14 9.5Q11.5 4 8.8 3.4Q5 3.5 3.6 6.4Q2.4 9 1.6 11.8Z" fill="#1e1412"/>
<ellipse cx="6.2" cy="17" rx="1.1" ry="0.8" fill="#c04838"/>
<ellipse cx="5" cy="10.6" rx="1.2" ry="0.6" fill="#4a342c"/><ellipse cx="10.2" cy="10.6" rx="1.2" ry="0.6" fill="#5a4a50"/>
</g></svg>
<svg style="left:1386px;top:908px" width="17" height="11" viewBox="0 0 17 11"><path d="M1 10L8.5 1.5L16 10" fill="none" stroke="#fff" stroke-width="1.4"/></svg>
<svg style="left:1413px;top:905px" width="22" height="18" viewBox="0 0 22 18"><path d="M1 6H4.5L9 2V16L4.5 12H1Z" fill="none" stroke="#fff" stroke-width="1.2"/><path d="M11.5 6.5Q13 9 11.5 11.5" fill="none" stroke="#fff" stroke-width="1.1"/><path d="M14.5 4Q17.5 9 14.5 14" fill="none" stroke="#9aa0a4" stroke-width="1.1"/><path d="M17.5 2Q21.5 9 17.5 16" fill="none" stroke="#70787c" stroke-width="1.1"/></svg>
<svg style="left:1443px;top:904px" width="22" height="19" viewBox="0 0 22 19"><rect x="3.6" y="1.6" width="17" height="11.5" fill="none" stroke="#fff" stroke-width="1.2"/><rect x="0.6" y="1.6" width="3.8" height="5" fill="#030b10" stroke="#fff" stroke-width="1.2"/><path d="M2.5 7V16.5H17M12 13V16.5" fill="none" stroke="#fff" stroke-width="1.2"/></svg>
<svg style="left:1473px;top:903px" width="22" height="22" viewBox="0 0 22 22"><path d="M1.6 1.6H20.4V16.4H13.5L11 19.5L8.5 16.4H1.6Z" fill="none" stroke="#fff" stroke-width="1.2"/><path d="M5 6H17M5 9H17M5 12H13" stroke="#fff" stroke-width="1.1"/></svg>
<span class="t cjs" style="left:1504.5px;top:903.5px;height:18.5px;line-height:18.5px;font-size:18.5px;color:#fff;">英</span>
<span class="t sans" style="left:1553px;top:893px;height:20px;line-height:20px;font-size:15px;color:#fff;letter-spacing:0.3px;">18:53</span>
<span class="t sans" style="left:1530.5px;top:913.5px;height:20px;line-height:20px;font-size:15px;color:#fff;letter-spacing:1px;">2023/11/15</span>
<div style="left:1620px;top:889px;width:1px;height:50px;background:#50585c;"></div>
</div>
</body></html>
